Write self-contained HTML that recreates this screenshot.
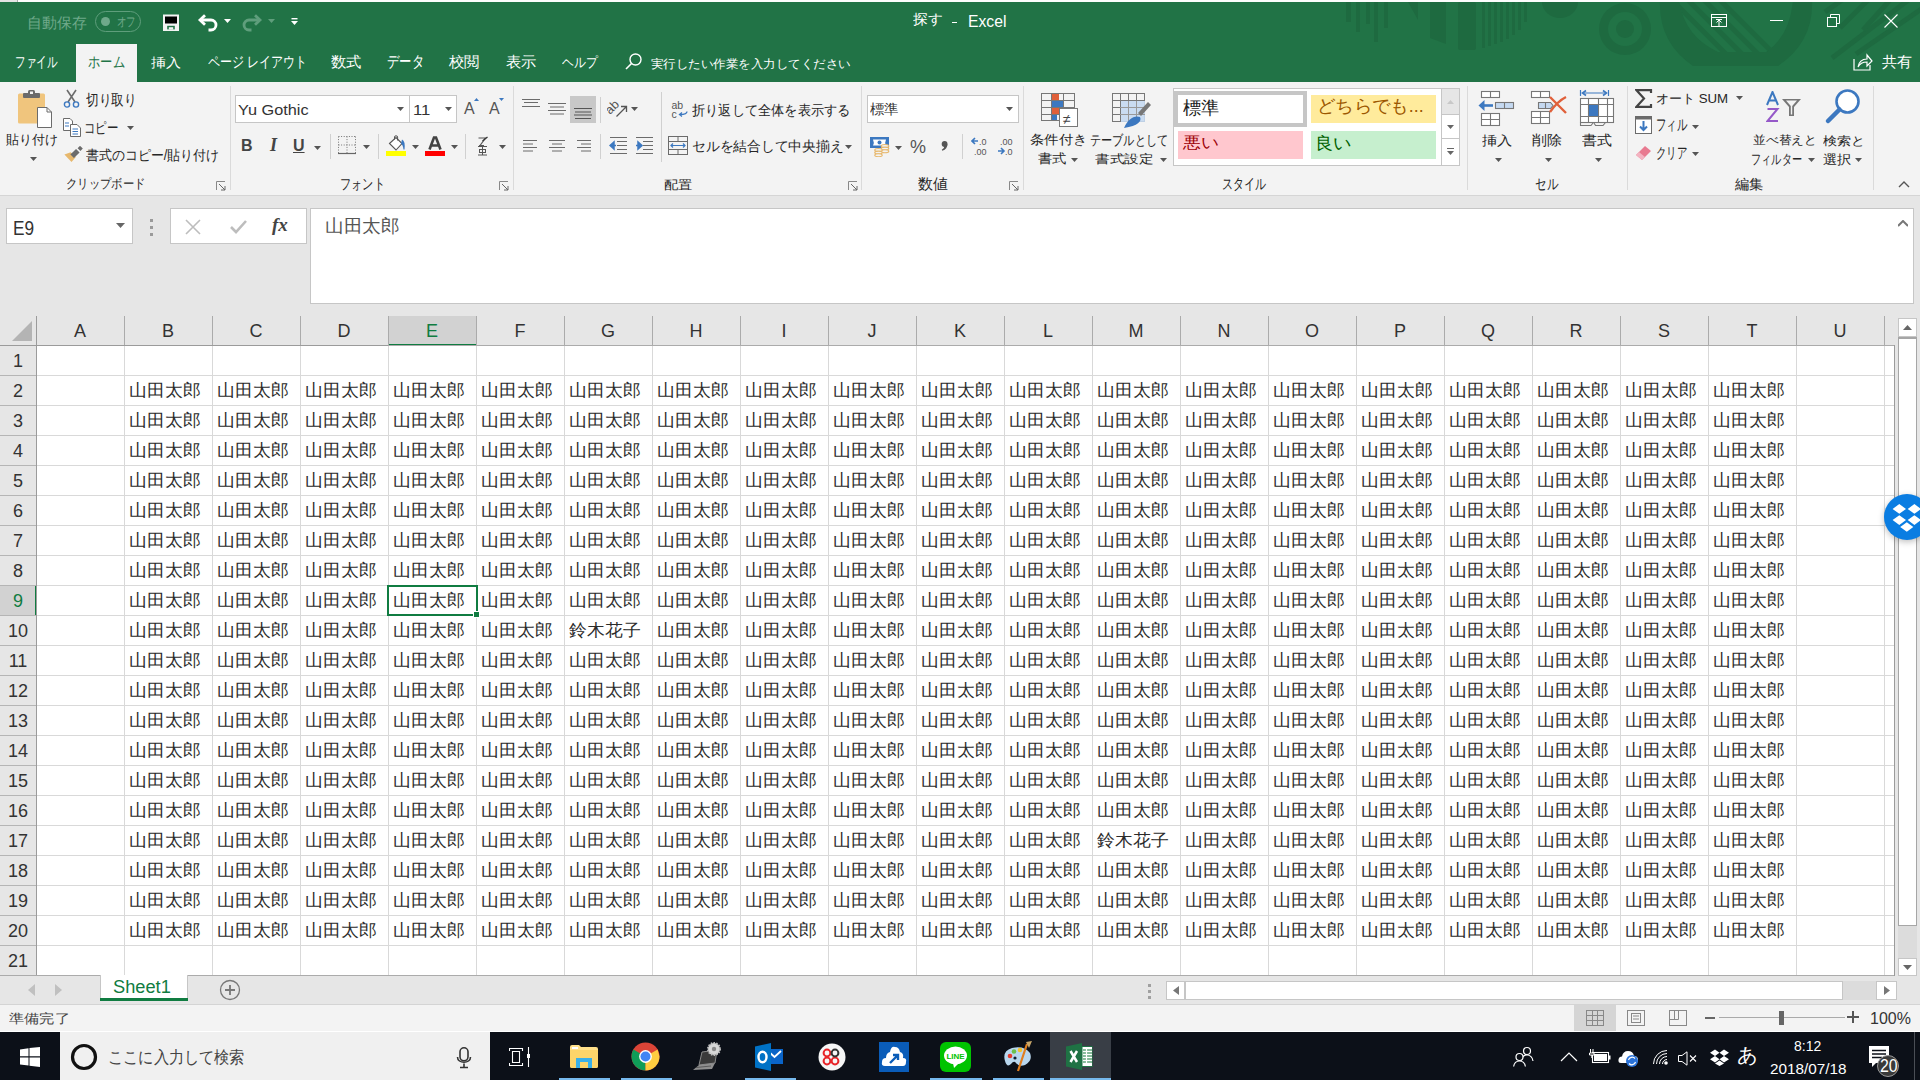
<!DOCTYPE html><html lang="ja"><head><meta charset="utf-8"><style>
html,body{margin:0;padding:0}
body{width:1920px;height:1080px;position:relative;overflow:hidden;background:#e6e6e6;font-family:"Liberation Sans",sans-serif}
.t{position:absolute;white-space:nowrap;line-height:1}
.cell{font-size:16.5px;color:#2b2b2b;transform:scaleX(1.05);transform-origin:0 0}
</style></head><body><div style="position:absolute;left:0px;top:0px;width:1920px;height:2px;background:#fdfdfd"></div><div style="position:absolute;left:0px;top:0px;width:17px;height:2px;background:#e3e3e3;border-right:1px solid #aaa"></div><div style="position:absolute;left:0px;top:2px;width:1920px;height:80px;background:#217346"></div><svg style="position:absolute;left:1320px;top:2px" width="600" height="80" viewBox="0 0 600 80">
<g fill="#1e6a40">
<rect x="26" y="0" width="5" height="20"/><rect x="36" y="0" width="4" height="30"/><rect x="46" y="0" width="4" height="22"/><rect x="54" y="0" width="4" height="40"/><rect x="64" y="0" width="4" height="26"/>
<polygon points="88,0 98,0 98,18"/>
<polygon points="110,0 126,0 126,42 110,36"/>
<rect x="138" y="0" width="18" height="48" rx="2"/>
<rect x="162" y="0" width="3" height="46"/><rect x="168" y="0" width="3" height="44"/><rect x="174" y="0" width="3" height="42"/><rect x="180" y="0" width="3" height="40"/><rect x="186" y="0" width="3" height="37"/><rect x="192" y="0" width="3" height="33"/><rect x="198" y="0" width="3" height="28"/><rect x="204" y="0" width="3" height="20"/>
<path d="M222,0 a18,16 0 0 0 36,0z"/>
<circle cx="305" cy="27" r="26"/>
</g>
<circle cx="305" cy="27" r="17" fill="#217346"/><circle cx="305" cy="27" r="9" fill="#1e6a40"/>
<defs><clipPath id="bowl"><path d="M359,-2 H473 Q470,34 446,50 H398 Q364,34 359,-2 Z"/></clipPath></defs>
<path d="M340,-2 H492 Q494,40 458,64 H373 Q338,40 340,-2 Z" fill="#1e6a40"/>
<path d="M359,-2 H473 Q470,34 446,50 H398 Q364,34 359,-2 Z" fill="#217346"/>
<g clip-path="url(#bowl)" stroke="#1e6a40" stroke-width="5"><line x1="352" y1="-2" x2="414" y2="60"/><line x1="368" y1="-2" x2="430" y2="60"/><line x1="384" y1="-2" x2="446" y2="60"/><line x1="400" y1="-2" x2="462" y2="60"/></g>
<g stroke="#1e6a40" stroke-width="5"><line x1="591" y1="-4" x2="512" y2="56"/><line x1="603" y1="6" x2="536" y2="52"/><line x1="522" y1="-2" x2="505" y2="10"/><line x1="548" y1="-2" x2="520" y2="26"/><line x1="570" y1="-2" x2="543" y2="28"/></g>
</svg><div class="t" style="left:27.01px;top:15.00px;font-size:15.00px;color:#6fa98a;transform:scaleX(0.9948);transform-origin:0 0;">自動保存</div><div style="position:absolute;left:95px;top:11px;width:46px;height:21px;border:1px solid #5f9e7c;border-radius:11px;box-sizing:border-box"></div><div style="position:absolute;left:101px;top:17px;width:9px;height:9px;background:#6fa98a;border-radius:50%"></div><div class="t" style="left:116.77px;top:15.00px;font-size:13.00px;color:#6fa98a;transform:scaleX(0.7292);transform-origin:0 0;">オフ</div><svg style="position:absolute;left:163px;top:14px;" width="17" height="17" viewBox="0 0 17 17"><rect x="0" y="0.5" width="16" height="16.5" fill="#f3f3f3"/><rect x="2" y="2.5" width="12" height="7" fill="{GREEN}"/><rect x="4.2" y="11.8" width="7.6" height="3.6" fill="#217346"/><rect x="5.8" y="13.2" width="4.4" height="2.4" fill="#f3f3f3"/></svg><svg style="position:absolute;left:197px;top:13px;" width="24" height="19" viewBox="0 0 24 19"><path d="M3.5,7 H14 A5,5 0 0 1 14,17 H11.5" fill="none" stroke="#fff" stroke-width="2.8"/><path d="M8,2.2 L3,7 L8,11.8" fill="none" stroke="#fff" stroke-width="2.8"/></svg><svg style="position:absolute;left:224px;top:19px;" width="8" height="5" viewBox="0 0 8 5"><path d="M0,0 h7 l-3.5,4z" fill="#fff"/></svg><svg style="position:absolute;left:241px;top:13px;" width="24" height="19" viewBox="0 0 24 19"><path d="M18.5,7 H8 A5,5 0 0 0 8,17 H10.5" fill="none" stroke="#5f9e7c" stroke-width="2.8"/><path d="M14,2.2 L19,7 L14,11.8" fill="none" stroke="#5f9e7c" stroke-width="2.8"/></svg><svg style="position:absolute;left:268px;top:19px;" width="8" height="5" viewBox="0 0 8 5"><path d="M0,0 h7 l-3.5,4z" fill="#5f9e7c"/></svg><svg style="position:absolute;left:291px;top:18px;" width="8" height="8" viewBox="0 0 8 8"><rect x="0.5" y="0" width="6" height="1.4" fill="#fff"/><path d="M0,3 h7 l-3.5,4z" fill="#fff"/></svg><div class="t" style="left:912.90px;top:13.07px;font-size:13.90px;color:#fff;transform:scaleX(1.0549);transform-origin:0 0;">探す</div><div class="t" style="left:967.70px;top:12.82px;font-size:16.36px;color:#fff;transform:scaleX(0.9599);transform-origin:0 0;">Excel</div><div style="position:absolute;left:952px;top:22px;width:5px;height:1px;background:#fff"></div><svg style="position:absolute;left:1711px;top:14px;" width="17" height="14" viewBox="0 0 17 14"><rect x="0.5" y="0.5" width="15" height="12" fill="none" stroke="#fff"/><line x1="0.5" y1="3.5" x2="15.5" y2="3.5" stroke="#fff"/><path d="M8,12 V6 M5.5,8.5 L8,6 L10.5,8.5 M5,5.5 H11" fill="none" stroke="#fff"/></svg><div style="position:absolute;left:1770px;top:20px;width:13px;height:1px;background:#fff"></div><svg style="position:absolute;left:1827px;top:14px;" width="14" height="14" viewBox="0 0 14 14"><rect x="0.5" y="3.5" width="9" height="9" fill="none" stroke="#fff"/><path d="M3.5,3.5 V0.5 H12.5 V9.5 H9.5" fill="none" stroke="#fff"/></svg><svg style="position:absolute;left:1884px;top:14px;" width="14" height="14" viewBox="0 0 14 14"><path d="M0.5,0.5 L13.5,13.5 M13.5,0.5 L0.5,13.5" stroke="#fff" stroke-width="1.1"/></svg><div style="position:absolute;left:76px;top:44px;width:61px;height:38px;background:#f3f3f3"></div><div class="t" style="left:15.30px;top:54.00px;font-size:15.00px;color:#fff;transform:scaleX(0.7034);transform-origin:0 0;">ファイル</div><div class="t" style="left:88.00px;top:54.00px;font-size:15.00px;color:#217346;transform:scaleX(0.8182);transform-origin:0 0;">ホーム</div><div class="t" style="left:151.00px;top:56.00px;font-size:13.00px;color:#fff;transform:scaleX(1.1538);transform-origin:0 0;">挿入</div><div class="t" style="left:207.50px;top:54.00px;font-size:15.00px;color:#fff;transform:scaleX(0.7975);transform-origin:0 0;">ページ レイアウト</div><div class="t" style="left:330.60px;top:54.00px;font-size:15.00px;color:#fff;transform:scaleX(1.0200);transform-origin:0 0;">数式</div><div class="t" style="left:386.67px;top:52.85px;font-size:16.15px;color:#fff;transform:scaleX(0.7716);transform-origin:0 0;">データ</div><div class="t" style="left:448.70px;top:54.00px;font-size:15.00px;color:#fff;transform:scaleX(1.0241);transform-origin:0 0;">校閲</div><div class="t" style="left:505.50px;top:54.00px;font-size:15.00px;color:#fff;transform:scaleX(1.0167);transform-origin:0 0;">表示</div><div class="t" style="left:562.40px;top:55.00px;font-size:14.00px;color:#fff;transform:scaleX(0.8478);transform-origin:0 0;">ヘルプ</div><svg style="position:absolute;left:625px;top:53px;" width="18" height="18" viewBox="0 0 18 18"><circle cx="10.5" cy="6.5" r="5.5" fill="none" stroke="#fff" stroke-width="1.4"/><line x1="6.5" y1="10.5" x2="1" y2="16" stroke="#fff" stroke-width="1.6"/></svg><div class="t" style="left:651.30px;top:58.00px;font-size:12.13px;color:#fff;transform:scaleX(1.0410);transform-origin:0 0;">実行したい作業を入力してください</div><svg style="position:absolute;left:1853px;top:53px;" width="20" height="18" viewBox="0 0 20 18"><path d="M1,6 V17 H17 V12" fill="none" stroke="#fff" stroke-width="1.2"/><path d="M5,14 C6,8 9,6 14,6 V2 L19,8 L14,13 V9 C10,9 7,10 5,14 Z" fill="none" stroke="#fff" stroke-width="1.2"/></svg><div class="t" style="left:1882.00px;top:54.00px;font-size:15.00px;color:#fff;transform:scaleX(1.0000);transform-origin:0 0;">共有</div><div style="position:absolute;left:0px;top:82px;width:1920px;height:113px;background:#f3f3f3"></div><div style="position:absolute;left:0px;top:195px;width:1920px;height:1px;background:#d5d5d5"></div><div style="position:absolute;left:230px;top:86px;width:1px;height:104px;background:#dadada"></div><div style="position:absolute;left:513px;top:86px;width:1px;height:104px;background:#dadada"></div><div style="position:absolute;left:861px;top:86px;width:1px;height:104px;background:#dadada"></div><div style="position:absolute;left:1023px;top:86px;width:1px;height:104px;background:#dadada"></div><div style="position:absolute;left:1467px;top:86px;width:1px;height:104px;background:#dadada"></div><div style="position:absolute;left:1627px;top:86px;width:1px;height:104px;background:#dadada"></div><div style="position:absolute;left:1873px;top:86px;width:1px;height:104px;background:#dadada"></div><div style="position:absolute;left:6px;top:208px;width:127px;height:36px;background:#fff;border:1px solid #c6c6c6;box-sizing:border-box"></div><div class="t" style="left:12.98px;top:218.43px;font-size:20.12px;color:#333;transform:scaleX(0.8584);transform-origin:0 0;">E9</div><svg style="position:absolute;left:116px;top:223px;" width="9" height="5" viewBox="0 0 9 5"><path d="M0,0 h9 l-4.5,5z" fill="#666"/></svg><div style="position:absolute;left:150px;top:219px;width:3px;height:3px;background:#9a9a9a"></div><div style="position:absolute;left:150px;top:226px;width:3px;height:3px;background:#9a9a9a"></div><div style="position:absolute;left:150px;top:233px;width:3px;height:3px;background:#9a9a9a"></div><div style="position:absolute;left:170px;top:208px;width:137px;height:36px;background:#fff;border:1px solid #c6c6c6;box-sizing:border-box"></div><svg style="position:absolute;left:185px;top:219px;" width="16" height="16" viewBox="0 0 16 16"><path d="M1,1 L15,15 M15,1 L1,15" stroke="#bdbdbd" stroke-width="1.6"/></svg><svg style="position:absolute;left:230px;top:219px;" width="17" height="15" viewBox="0 0 17 15"><path d="M1,8 L6,13 L16,2" fill="none" stroke="#bdbdbd" stroke-width="2.6"/></svg><div class="t" style="left:272px;top:215px;font-size:19px;color:#444;font-family:'Liberation Serif',serif;font-weight:bold"><i>fx</i></div><div style="position:absolute;left:310px;top:208px;width:1604px;height:96px;background:#fff;border:1px solid #c6c6c6;box-sizing:border-box"></div><div class="t" style="left:324.93px;top:217.50px;font-size:17.53px;color:#555;transform:scaleX(1.0358);transform-origin:0 0;">山田太郎</div><svg style="position:absolute;left:1898px;top:220px;" width="10" height="7" viewBox="0 0 10 7"><path d="M0,6 L5,1 L10,6" fill="none" stroke="#777" stroke-width="2"/></svg><div style="position:absolute;left:0px;top:316px;width:1894px;height:29px;background:#e6e6e6"></div><div style="position:absolute;left:0px;top:345px;width:36px;height:630px;background:#e6e6e6"></div><div style="position:absolute;left:37px;top:346px;width:1857px;height:629px;background:#fff"></div><svg style="position:absolute;left:11px;top:320px;" width="22" height="22" viewBox="0 0 22 22"><path d="M21,1 V21 H1 Z" fill="#b4b4b4"/></svg><div style="position:absolute;left:388px;top:316px;width:88px;height:29px;background:#d2d2d2"></div><div style="position:absolute;left:388px;top:344px;width:89px;height:2px;background:#107c41"></div><div style="position:absolute;left:0px;top:585px;width:36px;height:30px;background:#d2d2d2"></div><div style="position:absolute;left:35px;top:585px;width:2px;height:30px;background:#107c41"></div><div style="position:absolute;left:36px;top:316px;width:1px;height:29px;background:#ababab"></div><div style="position:absolute;left:124px;top:316px;width:1px;height:29px;background:#ababab"></div><div style="position:absolute;left:212px;top:316px;width:1px;height:29px;background:#ababab"></div><div style="position:absolute;left:300px;top:316px;width:1px;height:29px;background:#ababab"></div><div style="position:absolute;left:388px;top:316px;width:1px;height:29px;background:#ababab"></div><div style="position:absolute;left:476px;top:316px;width:1px;height:29px;background:#ababab"></div><div style="position:absolute;left:564px;top:316px;width:1px;height:29px;background:#ababab"></div><div style="position:absolute;left:652px;top:316px;width:1px;height:29px;background:#ababab"></div><div style="position:absolute;left:740px;top:316px;width:1px;height:29px;background:#ababab"></div><div style="position:absolute;left:828px;top:316px;width:1px;height:29px;background:#ababab"></div><div style="position:absolute;left:916px;top:316px;width:1px;height:29px;background:#ababab"></div><div style="position:absolute;left:1004px;top:316px;width:1px;height:29px;background:#ababab"></div><div style="position:absolute;left:1092px;top:316px;width:1px;height:29px;background:#ababab"></div><div style="position:absolute;left:1180px;top:316px;width:1px;height:29px;background:#ababab"></div><div style="position:absolute;left:1268px;top:316px;width:1px;height:29px;background:#ababab"></div><div style="position:absolute;left:1356px;top:316px;width:1px;height:29px;background:#ababab"></div><div style="position:absolute;left:1444px;top:316px;width:1px;height:29px;background:#ababab"></div><div style="position:absolute;left:1532px;top:316px;width:1px;height:29px;background:#ababab"></div><div style="position:absolute;left:1620px;top:316px;width:1px;height:29px;background:#ababab"></div><div style="position:absolute;left:1708px;top:316px;width:1px;height:29px;background:#ababab"></div><div style="position:absolute;left:1796px;top:316px;width:1px;height:29px;background:#ababab"></div><div style="position:absolute;left:1884px;top:316px;width:1px;height:29px;background:#ababab"></div><div style="position:absolute;left:0px;top:345px;width:1894px;height:1px;background:#ababab"></div><div style="position:absolute;left:0px;top:345px;width:388px;height:1px;background:#9b9b9b"></div><div style="position:absolute;left:36px;top:316px;width:1px;height:660px;background:#9b9b9b"></div><div style="position:absolute;left:124px;top:346px;width:1px;height:629px;background:#d9d9d9"></div><div style="position:absolute;left:212px;top:346px;width:1px;height:629px;background:#d9d9d9"></div><div style="position:absolute;left:300px;top:346px;width:1px;height:629px;background:#d9d9d9"></div><div style="position:absolute;left:388px;top:346px;width:1px;height:629px;background:#d9d9d9"></div><div style="position:absolute;left:476px;top:346px;width:1px;height:629px;background:#d9d9d9"></div><div style="position:absolute;left:564px;top:346px;width:1px;height:629px;background:#d9d9d9"></div><div style="position:absolute;left:652px;top:346px;width:1px;height:629px;background:#d9d9d9"></div><div style="position:absolute;left:740px;top:346px;width:1px;height:629px;background:#d9d9d9"></div><div style="position:absolute;left:828px;top:346px;width:1px;height:629px;background:#d9d9d9"></div><div style="position:absolute;left:916px;top:346px;width:1px;height:629px;background:#d9d9d9"></div><div style="position:absolute;left:1004px;top:346px;width:1px;height:629px;background:#d9d9d9"></div><div style="position:absolute;left:1092px;top:346px;width:1px;height:629px;background:#d9d9d9"></div><div style="position:absolute;left:1180px;top:346px;width:1px;height:629px;background:#d9d9d9"></div><div style="position:absolute;left:1268px;top:346px;width:1px;height:629px;background:#d9d9d9"></div><div style="position:absolute;left:1356px;top:346px;width:1px;height:629px;background:#d9d9d9"></div><div style="position:absolute;left:1444px;top:346px;width:1px;height:629px;background:#d9d9d9"></div><div style="position:absolute;left:1532px;top:346px;width:1px;height:629px;background:#d9d9d9"></div><div style="position:absolute;left:1620px;top:346px;width:1px;height:629px;background:#d9d9d9"></div><div style="position:absolute;left:1708px;top:346px;width:1px;height:629px;background:#d9d9d9"></div><div style="position:absolute;left:1796px;top:346px;width:1px;height:629px;background:#d9d9d9"></div><div style="position:absolute;left:1884px;top:346px;width:1px;height:629px;background:#d9d9d9"></div><div style="position:absolute;left:37px;top:375px;width:1857px;height:1px;background:#d9d9d9"></div><div style="position:absolute;left:0px;top:375px;width:36px;height:1px;background:#b5b5b5"></div><div style="position:absolute;left:37px;top:405px;width:1857px;height:1px;background:#d9d9d9"></div><div style="position:absolute;left:0px;top:405px;width:36px;height:1px;background:#b5b5b5"></div><div style="position:absolute;left:37px;top:435px;width:1857px;height:1px;background:#d9d9d9"></div><div style="position:absolute;left:0px;top:435px;width:36px;height:1px;background:#b5b5b5"></div><div style="position:absolute;left:37px;top:465px;width:1857px;height:1px;background:#d9d9d9"></div><div style="position:absolute;left:0px;top:465px;width:36px;height:1px;background:#b5b5b5"></div><div style="position:absolute;left:37px;top:495px;width:1857px;height:1px;background:#d9d9d9"></div><div style="position:absolute;left:0px;top:495px;width:36px;height:1px;background:#b5b5b5"></div><div style="position:absolute;left:37px;top:525px;width:1857px;height:1px;background:#d9d9d9"></div><div style="position:absolute;left:0px;top:525px;width:36px;height:1px;background:#b5b5b5"></div><div style="position:absolute;left:37px;top:555px;width:1857px;height:1px;background:#d9d9d9"></div><div style="position:absolute;left:0px;top:555px;width:36px;height:1px;background:#b5b5b5"></div><div style="position:absolute;left:37px;top:585px;width:1857px;height:1px;background:#d9d9d9"></div><div style="position:absolute;left:0px;top:585px;width:36px;height:1px;background:#b5b5b5"></div><div style="position:absolute;left:37px;top:615px;width:1857px;height:1px;background:#d9d9d9"></div><div style="position:absolute;left:0px;top:615px;width:36px;height:1px;background:#b5b5b5"></div><div style="position:absolute;left:37px;top:645px;width:1857px;height:1px;background:#d9d9d9"></div><div style="position:absolute;left:0px;top:645px;width:36px;height:1px;background:#b5b5b5"></div><div style="position:absolute;left:37px;top:675px;width:1857px;height:1px;background:#d9d9d9"></div><div style="position:absolute;left:0px;top:675px;width:36px;height:1px;background:#b5b5b5"></div><div style="position:absolute;left:37px;top:705px;width:1857px;height:1px;background:#d9d9d9"></div><div style="position:absolute;left:0px;top:705px;width:36px;height:1px;background:#b5b5b5"></div><div style="position:absolute;left:37px;top:735px;width:1857px;height:1px;background:#d9d9d9"></div><div style="position:absolute;left:0px;top:735px;width:36px;height:1px;background:#b5b5b5"></div><div style="position:absolute;left:37px;top:765px;width:1857px;height:1px;background:#d9d9d9"></div><div style="position:absolute;left:0px;top:765px;width:36px;height:1px;background:#b5b5b5"></div><div style="position:absolute;left:37px;top:795px;width:1857px;height:1px;background:#d9d9d9"></div><div style="position:absolute;left:0px;top:795px;width:36px;height:1px;background:#b5b5b5"></div><div style="position:absolute;left:37px;top:825px;width:1857px;height:1px;background:#d9d9d9"></div><div style="position:absolute;left:0px;top:825px;width:36px;height:1px;background:#b5b5b5"></div><div style="position:absolute;left:37px;top:855px;width:1857px;height:1px;background:#d9d9d9"></div><div style="position:absolute;left:0px;top:855px;width:36px;height:1px;background:#b5b5b5"></div><div style="position:absolute;left:37px;top:885px;width:1857px;height:1px;background:#d9d9d9"></div><div style="position:absolute;left:0px;top:885px;width:36px;height:1px;background:#b5b5b5"></div><div style="position:absolute;left:37px;top:915px;width:1857px;height:1px;background:#d9d9d9"></div><div style="position:absolute;left:0px;top:915px;width:36px;height:1px;background:#b5b5b5"></div><div style="position:absolute;left:37px;top:945px;width:1857px;height:1px;background:#d9d9d9"></div><div style="position:absolute;left:0px;top:945px;width:36px;height:1px;background:#b5b5b5"></div><div style="position:absolute;left:37px;top:975px;width:1857px;height:1px;background:#d9d9d9"></div><div style="position:absolute;left:0px;top:975px;width:36px;height:1px;background:#b5b5b5"></div><div class="t" style="left:36px;top:322px;width:88px;text-align:center;font-size:18px;color:#333">A</div><div class="t" style="left:124px;top:322px;width:88px;text-align:center;font-size:18px;color:#333">B</div><div class="t" style="left:212px;top:322px;width:88px;text-align:center;font-size:18px;color:#333">C</div><div class="t" style="left:300px;top:322px;width:88px;text-align:center;font-size:18px;color:#333">D</div><div class="t" style="left:388px;top:322px;width:88px;text-align:center;font-size:18px;color:#107c41">E</div><div class="t" style="left:476px;top:322px;width:88px;text-align:center;font-size:18px;color:#333">F</div><div class="t" style="left:564px;top:322px;width:88px;text-align:center;font-size:18px;color:#333">G</div><div class="t" style="left:652px;top:322px;width:88px;text-align:center;font-size:18px;color:#333">H</div><div class="t" style="left:740px;top:322px;width:88px;text-align:center;font-size:18px;color:#333">I</div><div class="t" style="left:828px;top:322px;width:88px;text-align:center;font-size:18px;color:#333">J</div><div class="t" style="left:916px;top:322px;width:88px;text-align:center;font-size:18px;color:#333">K</div><div class="t" style="left:1004px;top:322px;width:88px;text-align:center;font-size:18px;color:#333">L</div><div class="t" style="left:1092px;top:322px;width:88px;text-align:center;font-size:18px;color:#333">M</div><div class="t" style="left:1180px;top:322px;width:88px;text-align:center;font-size:18px;color:#333">N</div><div class="t" style="left:1268px;top:322px;width:88px;text-align:center;font-size:18px;color:#333">O</div><div class="t" style="left:1356px;top:322px;width:88px;text-align:center;font-size:18px;color:#333">P</div><div class="t" style="left:1444px;top:322px;width:88px;text-align:center;font-size:18px;color:#333">Q</div><div class="t" style="left:1532px;top:322px;width:88px;text-align:center;font-size:18px;color:#333">R</div><div class="t" style="left:1620px;top:322px;width:88px;text-align:center;font-size:18px;color:#333">S</div><div class="t" style="left:1708px;top:322px;width:88px;text-align:center;font-size:18px;color:#333">T</div><div class="t" style="left:1796px;top:322px;width:88px;text-align:center;font-size:18px;color:#333">U</div><div class="t" style="left:0px;top:352px;width:36px;text-align:center;font-size:18px;color:#333">1</div><div class="t" style="left:0px;top:382px;width:36px;text-align:center;font-size:18px;color:#333">2</div><div class="t" style="left:0px;top:412px;width:36px;text-align:center;font-size:18px;color:#333">3</div><div class="t" style="left:0px;top:442px;width:36px;text-align:center;font-size:18px;color:#333">4</div><div class="t" style="left:0px;top:472px;width:36px;text-align:center;font-size:18px;color:#333">5</div><div class="t" style="left:0px;top:502px;width:36px;text-align:center;font-size:18px;color:#333">6</div><div class="t" style="left:0px;top:532px;width:36px;text-align:center;font-size:18px;color:#333">7</div><div class="t" style="left:0px;top:562px;width:36px;text-align:center;font-size:18px;color:#333">8</div><div class="t" style="left:0px;top:592px;width:36px;text-align:center;font-size:18px;color:#107c41">9</div><div class="t" style="left:0px;top:622px;width:36px;text-align:center;font-size:18px;color:#333">10</div><div class="t" style="left:0px;top:652px;width:36px;text-align:center;font-size:18px;color:#333">11</div><div class="t" style="left:0px;top:682px;width:36px;text-align:center;font-size:18px;color:#333">12</div><div class="t" style="left:0px;top:712px;width:36px;text-align:center;font-size:18px;color:#333">13</div><div class="t" style="left:0px;top:742px;width:36px;text-align:center;font-size:18px;color:#333">14</div><div class="t" style="left:0px;top:772px;width:36px;text-align:center;font-size:18px;color:#333">15</div><div class="t" style="left:0px;top:802px;width:36px;text-align:center;font-size:18px;color:#333">16</div><div class="t" style="left:0px;top:832px;width:36px;text-align:center;font-size:18px;color:#333">17</div><div class="t" style="left:0px;top:862px;width:36px;text-align:center;font-size:18px;color:#333">18</div><div class="t" style="left:0px;top:892px;width:36px;text-align:center;font-size:18px;color:#333">19</div><div class="t" style="left:0px;top:922px;width:36px;text-align:center;font-size:18px;color:#333">20</div><div class="t" style="left:0px;top:952px;width:36px;text-align:center;font-size:18px;color:#333">21</div><div class="t cell" style="left:128.5px;top:382px">山田太郎</div><div class="t cell" style="left:216.5px;top:382px">山田太郎</div><div class="t cell" style="left:304.5px;top:382px">山田太郎</div><div class="t cell" style="left:392.5px;top:382px">山田太郎</div><div class="t cell" style="left:480.5px;top:382px">山田太郎</div><div class="t cell" style="left:568.5px;top:382px">山田太郎</div><div class="t cell" style="left:656.5px;top:382px">山田太郎</div><div class="t cell" style="left:744.5px;top:382px">山田太郎</div><div class="t cell" style="left:832.5px;top:382px">山田太郎</div><div class="t cell" style="left:920.5px;top:382px">山田太郎</div><div class="t cell" style="left:1008.5px;top:382px">山田太郎</div><div class="t cell" style="left:1096.5px;top:382px">山田太郎</div><div class="t cell" style="left:1184.5px;top:382px">山田太郎</div><div class="t cell" style="left:1272.5px;top:382px">山田太郎</div><div class="t cell" style="left:1360.5px;top:382px">山田太郎</div><div class="t cell" style="left:1448.5px;top:382px">山田太郎</div><div class="t cell" style="left:1536.5px;top:382px">山田太郎</div><div class="t cell" style="left:1624.5px;top:382px">山田太郎</div><div class="t cell" style="left:1712.5px;top:382px">山田太郎</div><div class="t cell" style="left:128.5px;top:412px">山田太郎</div><div class="t cell" style="left:216.5px;top:412px">山田太郎</div><div class="t cell" style="left:304.5px;top:412px">山田太郎</div><div class="t cell" style="left:392.5px;top:412px">山田太郎</div><div class="t cell" style="left:480.5px;top:412px">山田太郎</div><div class="t cell" style="left:568.5px;top:412px">山田太郎</div><div class="t cell" style="left:656.5px;top:412px">山田太郎</div><div class="t cell" style="left:744.5px;top:412px">山田太郎</div><div class="t cell" style="left:832.5px;top:412px">山田太郎</div><div class="t cell" style="left:920.5px;top:412px">山田太郎</div><div class="t cell" style="left:1008.5px;top:412px">山田太郎</div><div class="t cell" style="left:1096.5px;top:412px">山田太郎</div><div class="t cell" style="left:1184.5px;top:412px">山田太郎</div><div class="t cell" style="left:1272.5px;top:412px">山田太郎</div><div class="t cell" style="left:1360.5px;top:412px">山田太郎</div><div class="t cell" style="left:1448.5px;top:412px">山田太郎</div><div class="t cell" style="left:1536.5px;top:412px">山田太郎</div><div class="t cell" style="left:1624.5px;top:412px">山田太郎</div><div class="t cell" style="left:1712.5px;top:412px">山田太郎</div><div class="t cell" style="left:128.5px;top:442px">山田太郎</div><div class="t cell" style="left:216.5px;top:442px">山田太郎</div><div class="t cell" style="left:304.5px;top:442px">山田太郎</div><div class="t cell" style="left:392.5px;top:442px">山田太郎</div><div class="t cell" style="left:480.5px;top:442px">山田太郎</div><div class="t cell" style="left:568.5px;top:442px">山田太郎</div><div class="t cell" style="left:656.5px;top:442px">山田太郎</div><div class="t cell" style="left:744.5px;top:442px">山田太郎</div><div class="t cell" style="left:832.5px;top:442px">山田太郎</div><div class="t cell" style="left:920.5px;top:442px">山田太郎</div><div class="t cell" style="left:1008.5px;top:442px">山田太郎</div><div class="t cell" style="left:1096.5px;top:442px">山田太郎</div><div class="t cell" style="left:1184.5px;top:442px">山田太郎</div><div class="t cell" style="left:1272.5px;top:442px">山田太郎</div><div class="t cell" style="left:1360.5px;top:442px">山田太郎</div><div class="t cell" style="left:1448.5px;top:442px">山田太郎</div><div class="t cell" style="left:1536.5px;top:442px">山田太郎</div><div class="t cell" style="left:1624.5px;top:442px">山田太郎</div><div class="t cell" style="left:1712.5px;top:442px">山田太郎</div><div class="t cell" style="left:128.5px;top:472px">山田太郎</div><div class="t cell" style="left:216.5px;top:472px">山田太郎</div><div class="t cell" style="left:304.5px;top:472px">山田太郎</div><div class="t cell" style="left:392.5px;top:472px">山田太郎</div><div class="t cell" style="left:480.5px;top:472px">山田太郎</div><div class="t cell" style="left:568.5px;top:472px">山田太郎</div><div class="t cell" style="left:656.5px;top:472px">山田太郎</div><div class="t cell" style="left:744.5px;top:472px">山田太郎</div><div class="t cell" style="left:832.5px;top:472px">山田太郎</div><div class="t cell" style="left:920.5px;top:472px">山田太郎</div><div class="t cell" style="left:1008.5px;top:472px">山田太郎</div><div class="t cell" style="left:1096.5px;top:472px">山田太郎</div><div class="t cell" style="left:1184.5px;top:472px">山田太郎</div><div class="t cell" style="left:1272.5px;top:472px">山田太郎</div><div class="t cell" style="left:1360.5px;top:472px">山田太郎</div><div class="t cell" style="left:1448.5px;top:472px">山田太郎</div><div class="t cell" style="left:1536.5px;top:472px">山田太郎</div><div class="t cell" style="left:1624.5px;top:472px">山田太郎</div><div class="t cell" style="left:1712.5px;top:472px">山田太郎</div><div class="t cell" style="left:128.5px;top:502px">山田太郎</div><div class="t cell" style="left:216.5px;top:502px">山田太郎</div><div class="t cell" style="left:304.5px;top:502px">山田太郎</div><div class="t cell" style="left:392.5px;top:502px">山田太郎</div><div class="t cell" style="left:480.5px;top:502px">山田太郎</div><div class="t cell" style="left:568.5px;top:502px">山田太郎</div><div class="t cell" style="left:656.5px;top:502px">山田太郎</div><div class="t cell" style="left:744.5px;top:502px">山田太郎</div><div class="t cell" style="left:832.5px;top:502px">山田太郎</div><div class="t cell" style="left:920.5px;top:502px">山田太郎</div><div class="t cell" style="left:1008.5px;top:502px">山田太郎</div><div class="t cell" style="left:1096.5px;top:502px">山田太郎</div><div class="t cell" style="left:1184.5px;top:502px">山田太郎</div><div class="t cell" style="left:1272.5px;top:502px">山田太郎</div><div class="t cell" style="left:1360.5px;top:502px">山田太郎</div><div class="t cell" style="left:1448.5px;top:502px">山田太郎</div><div class="t cell" style="left:1536.5px;top:502px">山田太郎</div><div class="t cell" style="left:1624.5px;top:502px">山田太郎</div><div class="t cell" style="left:1712.5px;top:502px">山田太郎</div><div class="t cell" style="left:128.5px;top:532px">山田太郎</div><div class="t cell" style="left:216.5px;top:532px">山田太郎</div><div class="t cell" style="left:304.5px;top:532px">山田太郎</div><div class="t cell" style="left:392.5px;top:532px">山田太郎</div><div class="t cell" style="left:480.5px;top:532px">山田太郎</div><div class="t cell" style="left:568.5px;top:532px">山田太郎</div><div class="t cell" style="left:656.5px;top:532px">山田太郎</div><div class="t cell" style="left:744.5px;top:532px">山田太郎</div><div class="t cell" style="left:832.5px;top:532px">山田太郎</div><div class="t cell" style="left:920.5px;top:532px">山田太郎</div><div class="t cell" style="left:1008.5px;top:532px">山田太郎</div><div class="t cell" style="left:1096.5px;top:532px">山田太郎</div><div class="t cell" style="left:1184.5px;top:532px">山田太郎</div><div class="t cell" style="left:1272.5px;top:532px">山田太郎</div><div class="t cell" style="left:1360.5px;top:532px">山田太郎</div><div class="t cell" style="left:1448.5px;top:532px">山田太郎</div><div class="t cell" style="left:1536.5px;top:532px">山田太郎</div><div class="t cell" style="left:1624.5px;top:532px">山田太郎</div><div class="t cell" style="left:1712.5px;top:532px">山田太郎</div><div class="t cell" style="left:128.5px;top:562px">山田太郎</div><div class="t cell" style="left:216.5px;top:562px">山田太郎</div><div class="t cell" style="left:304.5px;top:562px">山田太郎</div><div class="t cell" style="left:392.5px;top:562px">山田太郎</div><div class="t cell" style="left:480.5px;top:562px">山田太郎</div><div class="t cell" style="left:568.5px;top:562px">山田太郎</div><div class="t cell" style="left:656.5px;top:562px">山田太郎</div><div class="t cell" style="left:744.5px;top:562px">山田太郎</div><div class="t cell" style="left:832.5px;top:562px">山田太郎</div><div class="t cell" style="left:920.5px;top:562px">山田太郎</div><div class="t cell" style="left:1008.5px;top:562px">山田太郎</div><div class="t cell" style="left:1096.5px;top:562px">山田太郎</div><div class="t cell" style="left:1184.5px;top:562px">山田太郎</div><div class="t cell" style="left:1272.5px;top:562px">山田太郎</div><div class="t cell" style="left:1360.5px;top:562px">山田太郎</div><div class="t cell" style="left:1448.5px;top:562px">山田太郎</div><div class="t cell" style="left:1536.5px;top:562px">山田太郎</div><div class="t cell" style="left:1624.5px;top:562px">山田太郎</div><div class="t cell" style="left:1712.5px;top:562px">山田太郎</div><div class="t cell" style="left:128.5px;top:592px">山田太郎</div><div class="t cell" style="left:216.5px;top:592px">山田太郎</div><div class="t cell" style="left:304.5px;top:592px">山田太郎</div><div class="t cell" style="left:392.5px;top:592px">山田太郎</div><div class="t cell" style="left:480.5px;top:592px">山田太郎</div><div class="t cell" style="left:568.5px;top:592px">山田太郎</div><div class="t cell" style="left:656.5px;top:592px">山田太郎</div><div class="t cell" style="left:744.5px;top:592px">山田太郎</div><div class="t cell" style="left:832.5px;top:592px">山田太郎</div><div class="t cell" style="left:920.5px;top:592px">山田太郎</div><div class="t cell" style="left:1008.5px;top:592px">山田太郎</div><div class="t cell" style="left:1096.5px;top:592px">山田太郎</div><div class="t cell" style="left:1184.5px;top:592px">山田太郎</div><div class="t cell" style="left:1272.5px;top:592px">山田太郎</div><div class="t cell" style="left:1360.5px;top:592px">山田太郎</div><div class="t cell" style="left:1448.5px;top:592px">山田太郎</div><div class="t cell" style="left:1536.5px;top:592px">山田太郎</div><div class="t cell" style="left:1624.5px;top:592px">山田太郎</div><div class="t cell" style="left:1712.5px;top:592px">山田太郎</div><div class="t cell" style="left:128.5px;top:622px">山田太郎</div><div class="t cell" style="left:216.5px;top:622px">山田太郎</div><div class="t cell" style="left:304.5px;top:622px">山田太郎</div><div class="t cell" style="left:392.5px;top:622px">山田太郎</div><div class="t cell" style="left:480.5px;top:622px">山田太郎</div><div class="t cell" style="left:568.5px;top:622px">鈴木花子</div><div class="t cell" style="left:656.5px;top:622px">山田太郎</div><div class="t cell" style="left:744.5px;top:622px">山田太郎</div><div class="t cell" style="left:832.5px;top:622px">山田太郎</div><div class="t cell" style="left:920.5px;top:622px">山田太郎</div><div class="t cell" style="left:1008.5px;top:622px">山田太郎</div><div class="t cell" style="left:1096.5px;top:622px">山田太郎</div><div class="t cell" style="left:1184.5px;top:622px">山田太郎</div><div class="t cell" style="left:1272.5px;top:622px">山田太郎</div><div class="t cell" style="left:1360.5px;top:622px">山田太郎</div><div class="t cell" style="left:1448.5px;top:622px">山田太郎</div><div class="t cell" style="left:1536.5px;top:622px">山田太郎</div><div class="t cell" style="left:1624.5px;top:622px">山田太郎</div><div class="t cell" style="left:1712.5px;top:622px">山田太郎</div><div class="t cell" style="left:128.5px;top:652px">山田太郎</div><div class="t cell" style="left:216.5px;top:652px">山田太郎</div><div class="t cell" style="left:304.5px;top:652px">山田太郎</div><div class="t cell" style="left:392.5px;top:652px">山田太郎</div><div class="t cell" style="left:480.5px;top:652px">山田太郎</div><div class="t cell" style="left:568.5px;top:652px">山田太郎</div><div class="t cell" style="left:656.5px;top:652px">山田太郎</div><div class="t cell" style="left:744.5px;top:652px">山田太郎</div><div class="t cell" style="left:832.5px;top:652px">山田太郎</div><div class="t cell" style="left:920.5px;top:652px">山田太郎</div><div class="t cell" style="left:1008.5px;top:652px">山田太郎</div><div class="t cell" style="left:1096.5px;top:652px">山田太郎</div><div class="t cell" style="left:1184.5px;top:652px">山田太郎</div><div class="t cell" style="left:1272.5px;top:652px">山田太郎</div><div class="t cell" style="left:1360.5px;top:652px">山田太郎</div><div class="t cell" style="left:1448.5px;top:652px">山田太郎</div><div class="t cell" style="left:1536.5px;top:652px">山田太郎</div><div class="t cell" style="left:1624.5px;top:652px">山田太郎</div><div class="t cell" style="left:1712.5px;top:652px">山田太郎</div><div class="t cell" style="left:128.5px;top:682px">山田太郎</div><div class="t cell" style="left:216.5px;top:682px">山田太郎</div><div class="t cell" style="left:304.5px;top:682px">山田太郎</div><div class="t cell" style="left:392.5px;top:682px">山田太郎</div><div class="t cell" style="left:480.5px;top:682px">山田太郎</div><div class="t cell" style="left:568.5px;top:682px">山田太郎</div><div class="t cell" style="left:656.5px;top:682px">山田太郎</div><div class="t cell" style="left:744.5px;top:682px">山田太郎</div><div class="t cell" style="left:832.5px;top:682px">山田太郎</div><div class="t cell" style="left:920.5px;top:682px">山田太郎</div><div class="t cell" style="left:1008.5px;top:682px">山田太郎</div><div class="t cell" style="left:1096.5px;top:682px">山田太郎</div><div class="t cell" style="left:1184.5px;top:682px">山田太郎</div><div class="t cell" style="left:1272.5px;top:682px">山田太郎</div><div class="t cell" style="left:1360.5px;top:682px">山田太郎</div><div class="t cell" style="left:1448.5px;top:682px">山田太郎</div><div class="t cell" style="left:1536.5px;top:682px">山田太郎</div><div class="t cell" style="left:1624.5px;top:682px">山田太郎</div><div class="t cell" style="left:1712.5px;top:682px">山田太郎</div><div class="t cell" style="left:128.5px;top:712px">山田太郎</div><div class="t cell" style="left:216.5px;top:712px">山田太郎</div><div class="t cell" style="left:304.5px;top:712px">山田太郎</div><div class="t cell" style="left:392.5px;top:712px">山田太郎</div><div class="t cell" style="left:480.5px;top:712px">山田太郎</div><div class="t cell" style="left:568.5px;top:712px">山田太郎</div><div class="t cell" style="left:656.5px;top:712px">山田太郎</div><div class="t cell" style="left:744.5px;top:712px">山田太郎</div><div class="t cell" style="left:832.5px;top:712px">山田太郎</div><div class="t cell" style="left:920.5px;top:712px">山田太郎</div><div class="t cell" style="left:1008.5px;top:712px">山田太郎</div><div class="t cell" style="left:1096.5px;top:712px">山田太郎</div><div class="t cell" style="left:1184.5px;top:712px">山田太郎</div><div class="t cell" style="left:1272.5px;top:712px">山田太郎</div><div class="t cell" style="left:1360.5px;top:712px">山田太郎</div><div class="t cell" style="left:1448.5px;top:712px">山田太郎</div><div class="t cell" style="left:1536.5px;top:712px">山田太郎</div><div class="t cell" style="left:1624.5px;top:712px">山田太郎</div><div class="t cell" style="left:1712.5px;top:712px">山田太郎</div><div class="t cell" style="left:128.5px;top:742px">山田太郎</div><div class="t cell" style="left:216.5px;top:742px">山田太郎</div><div class="t cell" style="left:304.5px;top:742px">山田太郎</div><div class="t cell" style="left:392.5px;top:742px">山田太郎</div><div class="t cell" style="left:480.5px;top:742px">山田太郎</div><div class="t cell" style="left:568.5px;top:742px">山田太郎</div><div class="t cell" style="left:656.5px;top:742px">山田太郎</div><div class="t cell" style="left:744.5px;top:742px">山田太郎</div><div class="t cell" style="left:832.5px;top:742px">山田太郎</div><div class="t cell" style="left:920.5px;top:742px">山田太郎</div><div class="t cell" style="left:1008.5px;top:742px">山田太郎</div><div class="t cell" style="left:1096.5px;top:742px">山田太郎</div><div class="t cell" style="left:1184.5px;top:742px">山田太郎</div><div class="t cell" style="left:1272.5px;top:742px">山田太郎</div><div class="t cell" style="left:1360.5px;top:742px">山田太郎</div><div class="t cell" style="left:1448.5px;top:742px">山田太郎</div><div class="t cell" style="left:1536.5px;top:742px">山田太郎</div><div class="t cell" style="left:1624.5px;top:742px">山田太郎</div><div class="t cell" style="left:1712.5px;top:742px">山田太郎</div><div class="t cell" style="left:128.5px;top:772px">山田太郎</div><div class="t cell" style="left:216.5px;top:772px">山田太郎</div><div class="t cell" style="left:304.5px;top:772px">山田太郎</div><div class="t cell" style="left:392.5px;top:772px">山田太郎</div><div class="t cell" style="left:480.5px;top:772px">山田太郎</div><div class="t cell" style="left:568.5px;top:772px">山田太郎</div><div class="t cell" style="left:656.5px;top:772px">山田太郎</div><div class="t cell" style="left:744.5px;top:772px">山田太郎</div><div class="t cell" style="left:832.5px;top:772px">山田太郎</div><div class="t cell" style="left:920.5px;top:772px">山田太郎</div><div class="t cell" style="left:1008.5px;top:772px">山田太郎</div><div class="t cell" style="left:1096.5px;top:772px">山田太郎</div><div class="t cell" style="left:1184.5px;top:772px">山田太郎</div><div class="t cell" style="left:1272.5px;top:772px">山田太郎</div><div class="t cell" style="left:1360.5px;top:772px">山田太郎</div><div class="t cell" style="left:1448.5px;top:772px">山田太郎</div><div class="t cell" style="left:1536.5px;top:772px">山田太郎</div><div class="t cell" style="left:1624.5px;top:772px">山田太郎</div><div class="t cell" style="left:1712.5px;top:772px">山田太郎</div><div class="t cell" style="left:128.5px;top:802px">山田太郎</div><div class="t cell" style="left:216.5px;top:802px">山田太郎</div><div class="t cell" style="left:304.5px;top:802px">山田太郎</div><div class="t cell" style="left:392.5px;top:802px">山田太郎</div><div class="t cell" style="left:480.5px;top:802px">山田太郎</div><div class="t cell" style="left:568.5px;top:802px">山田太郎</div><div class="t cell" style="left:656.5px;top:802px">山田太郎</div><div class="t cell" style="left:744.5px;top:802px">山田太郎</div><div class="t cell" style="left:832.5px;top:802px">山田太郎</div><div class="t cell" style="left:920.5px;top:802px">山田太郎</div><div class="t cell" style="left:1008.5px;top:802px">山田太郎</div><div class="t cell" style="left:1096.5px;top:802px">山田太郎</div><div class="t cell" style="left:1184.5px;top:802px">山田太郎</div><div class="t cell" style="left:1272.5px;top:802px">山田太郎</div><div class="t cell" style="left:1360.5px;top:802px">山田太郎</div><div class="t cell" style="left:1448.5px;top:802px">山田太郎</div><div class="t cell" style="left:1536.5px;top:802px">山田太郎</div><div class="t cell" style="left:1624.5px;top:802px">山田太郎</div><div class="t cell" style="left:1712.5px;top:802px">山田太郎</div><div class="t cell" style="left:128.5px;top:832px">山田太郎</div><div class="t cell" style="left:216.5px;top:832px">山田太郎</div><div class="t cell" style="left:304.5px;top:832px">山田太郎</div><div class="t cell" style="left:392.5px;top:832px">山田太郎</div><div class="t cell" style="left:480.5px;top:832px">山田太郎</div><div class="t cell" style="left:568.5px;top:832px">山田太郎</div><div class="t cell" style="left:656.5px;top:832px">山田太郎</div><div class="t cell" style="left:744.5px;top:832px">山田太郎</div><div class="t cell" style="left:832.5px;top:832px">山田太郎</div><div class="t cell" style="left:920.5px;top:832px">山田太郎</div><div class="t cell" style="left:1008.5px;top:832px">山田太郎</div><div class="t cell" style="left:1096.5px;top:832px">鈴木花子</div><div class="t cell" style="left:1184.5px;top:832px">山田太郎</div><div class="t cell" style="left:1272.5px;top:832px">山田太郎</div><div class="t cell" style="left:1360.5px;top:832px">山田太郎</div><div class="t cell" style="left:1448.5px;top:832px">山田太郎</div><div class="t cell" style="left:1536.5px;top:832px">山田太郎</div><div class="t cell" style="left:1624.5px;top:832px">山田太郎</div><div class="t cell" style="left:1712.5px;top:832px">山田太郎</div><div class="t cell" style="left:128.5px;top:862px">山田太郎</div><div class="t cell" style="left:216.5px;top:862px">山田太郎</div><div class="t cell" style="left:304.5px;top:862px">山田太郎</div><div class="t cell" style="left:392.5px;top:862px">山田太郎</div><div class="t cell" style="left:480.5px;top:862px">山田太郎</div><div class="t cell" style="left:568.5px;top:862px">山田太郎</div><div class="t cell" style="left:656.5px;top:862px">山田太郎</div><div class="t cell" style="left:744.5px;top:862px">山田太郎</div><div class="t cell" style="left:832.5px;top:862px">山田太郎</div><div class="t cell" style="left:920.5px;top:862px">山田太郎</div><div class="t cell" style="left:1008.5px;top:862px">山田太郎</div><div class="t cell" style="left:1096.5px;top:862px">山田太郎</div><div class="t cell" style="left:1184.5px;top:862px">山田太郎</div><div class="t cell" style="left:1272.5px;top:862px">山田太郎</div><div class="t cell" style="left:1360.5px;top:862px">山田太郎</div><div class="t cell" style="left:1448.5px;top:862px">山田太郎</div><div class="t cell" style="left:1536.5px;top:862px">山田太郎</div><div class="t cell" style="left:1624.5px;top:862px">山田太郎</div><div class="t cell" style="left:1712.5px;top:862px">山田太郎</div><div class="t cell" style="left:128.5px;top:892px">山田太郎</div><div class="t cell" style="left:216.5px;top:892px">山田太郎</div><div class="t cell" style="left:304.5px;top:892px">山田太郎</div><div class="t cell" style="left:392.5px;top:892px">山田太郎</div><div class="t cell" style="left:480.5px;top:892px">山田太郎</div><div class="t cell" style="left:568.5px;top:892px">山田太郎</div><div class="t cell" style="left:656.5px;top:892px">山田太郎</div><div class="t cell" style="left:744.5px;top:892px">山田太郎</div><div class="t cell" style="left:832.5px;top:892px">山田太郎</div><div class="t cell" style="left:920.5px;top:892px">山田太郎</div><div class="t cell" style="left:1008.5px;top:892px">山田太郎</div><div class="t cell" style="left:1096.5px;top:892px">山田太郎</div><div class="t cell" style="left:1184.5px;top:892px">山田太郎</div><div class="t cell" style="left:1272.5px;top:892px">山田太郎</div><div class="t cell" style="left:1360.5px;top:892px">山田太郎</div><div class="t cell" style="left:1448.5px;top:892px">山田太郎</div><div class="t cell" style="left:1536.5px;top:892px">山田太郎</div><div class="t cell" style="left:1624.5px;top:892px">山田太郎</div><div class="t cell" style="left:1712.5px;top:892px">山田太郎</div><div class="t cell" style="left:128.5px;top:922px">山田太郎</div><div class="t cell" style="left:216.5px;top:922px">山田太郎</div><div class="t cell" style="left:304.5px;top:922px">山田太郎</div><div class="t cell" style="left:392.5px;top:922px">山田太郎</div><div class="t cell" style="left:480.5px;top:922px">山田太郎</div><div class="t cell" style="left:568.5px;top:922px">山田太郎</div><div class="t cell" style="left:656.5px;top:922px">山田太郎</div><div class="t cell" style="left:744.5px;top:922px">山田太郎</div><div class="t cell" style="left:832.5px;top:922px">山田太郎</div><div class="t cell" style="left:920.5px;top:922px">山田太郎</div><div class="t cell" style="left:1008.5px;top:922px">山田太郎</div><div class="t cell" style="left:1096.5px;top:922px">山田太郎</div><div class="t cell" style="left:1184.5px;top:922px">山田太郎</div><div class="t cell" style="left:1272.5px;top:922px">山田太郎</div><div class="t cell" style="left:1360.5px;top:922px">山田太郎</div><div class="t cell" style="left:1448.5px;top:922px">山田太郎</div><div class="t cell" style="left:1536.5px;top:922px">山田太郎</div><div class="t cell" style="left:1624.5px;top:922px">山田太郎</div><div class="t cell" style="left:1712.5px;top:922px">山田太郎</div><div style="position:absolute;left:387px;top:585px;width:91px;height:31px;border:2px solid #107c41;box-sizing:border-box"></div><div style="position:absolute;left:473px;top:611px;width:7px;height:7px;background:#107c41;border:1px solid #fff;box-sizing:border-box"></div><div style="position:absolute;left:1894px;top:345px;width:1px;height:632px;background:#9b9b9b"></div><div style="position:absolute;left:1895px;top:316px;width:25px;height:660px;background:#e6e6e6"></div><div style="position:absolute;left:1898px;top:337px;width:19px;height:621px;background:#dcdcdc"></div><div style="position:absolute;left:1898px;top:318px;width:19px;height:19px;background:#fff;border:1px solid #c6c6c6;box-sizing:border-box"></div><svg style="position:absolute;left:1903px;top:325px;" width="9" height="5" viewBox="0 0 9 5"><path d="M0,5 L4.5,0 L9,5z" fill="#666"/></svg><div style="position:absolute;left:1898px;top:337px;width:19px;height:589px;background:#fff;border:1px solid #a6a6a6;border-width:2px 1px 1px 1px;box-sizing:border-box"></div><div style="position:absolute;left:1898px;top:958px;width:19px;height:18px;background:#fff;border:1px solid #c6c6c6;box-sizing:border-box"></div><svg style="position:absolute;left:1903px;top:965px;" width="9" height="5" viewBox="0 0 9 5"><path d="M0,0 L4.5,5 L9,0z" fill="#666"/></svg><div style="position:absolute;left:0px;top:975px;width:1894px;height:2px;background:#ababab"></div><div style="position:absolute;left:0px;top:976px;width:1920px;height:28px;background:#e6e6e6"></div><svg style="position:absolute;left:28px;top:984px;" width="8" height="12" viewBox="0 0 8 12"><path d="M7,0 V12 L0,6z" fill="#c0c0c0"/></svg><svg style="position:absolute;left:55px;top:984px;" width="8" height="12" viewBox="0 0 8 12"><path d="M0,0 V12 L7,6z" fill="#c0c0c0"/></svg><div style="position:absolute;left:100px;top:975px;width:88px;height:26px;background:#fff;border:1px solid #c6c6c6;border-top:none;box-sizing:border-box"></div><div style="position:absolute;left:100px;top:998px;width:88px;height:3px;background:#107c41"></div><div class="t" style="left:113.43px;top:977.60px;font-size:18.70px;color:#107c41;transform:scaleX(0.9760);transform-origin:0 0;">Sheet1</div><svg style="position:absolute;left:219px;top:979px;" width="22" height="22" viewBox="0 0 22 22"><circle cx="11" cy="11" r="9.5" fill="none" stroke="#777" stroke-width="1.3"/><path d="M11,6 V16 M6,11 H16" stroke="#777" stroke-width="1.8"/></svg><div style="position:absolute;left:1148px;top:984px;width:3px;height:3px;background:#a0a0a0"></div><div style="position:absolute;left:1148px;top:990px;width:3px;height:3px;background:#a0a0a0"></div><div style="position:absolute;left:1148px;top:996px;width:3px;height:3px;background:#a0a0a0"></div><div style="position:absolute;left:1166px;top:981px;width:730px;height:19px;background:#dcdcdc"></div><div style="position:absolute;left:1166px;top:981px;width:19px;height:19px;background:#fff;border:1px solid #c6c6c6;box-sizing:border-box"></div><svg style="position:absolute;left:1173px;top:986px;" width="6" height="9" viewBox="0 0 6 9"><path d="M6,0 V9 L0,4.5z" fill="#777"/></svg><div style="position:absolute;left:1185px;top:981px;width:658px;height:19px;background:#fff;border:1px solid #c6c6c6;box-sizing:border-box"></div><div style="position:absolute;left:1876px;top:981px;width:21px;height:19px;background:#fff;border:1px solid #c6c6c6;box-sizing:border-box"></div><svg style="position:absolute;left:1884px;top:986px;" width="6" height="9" viewBox="0 0 6 9"><path d="M0,0 V9 L6,4.5z" fill="#777"/></svg><div style="position:absolute;left:0px;top:1004px;width:1920px;height:1px;background:#d4d4d4"></div><div style="position:absolute;left:0px;top:1005px;width:1920px;height:27px;background:#f3f3f3"></div><div class="t" style="left:8.60px;top:1012.00px;font-size:13.00px;color:#444;transform:scaleX(1.1687);transform-origin:0 0;">準備完了</div><div style="position:absolute;left:1574px;top:1005px;width:42px;height:27px;background:#d5d5d5"></div><svg style="position:absolute;left:1586px;top:1010px;" width="18" height="16" viewBox="0 0 18 16"><rect x="0.5" y="0.5" width="17" height="15" fill="none" stroke="#888"/><path d="M0,5.5 H18 M0,10.5 H18 M6.5,0 V16 M11.5,0 V16" stroke="#888"/></svg><svg style="position:absolute;left:1627px;top:1010px;" width="18" height="16" viewBox="0 0 18 16"><rect x="0.5" y="0.5" width="17" height="15" fill="none" stroke="#888"/><rect x="4.5" y="3.5" width="9" height="9" fill="none" stroke="#888"/><path d="M6,6 H12 M6,9 H12" stroke="#888"/></svg><svg style="position:absolute;left:1669px;top:1010px;" width="18" height="16" viewBox="0 0 18 16"><rect x="0.5" y="0.5" width="17" height="15" fill="none" stroke="#888"/><path d="M0,9.5 H9.5 V0 M5.5,0 V9.5" fill="none" stroke="#888"/></svg><div style="position:absolute;left:1705px;top:1017px;width:10px;height:2px;background:#666"></div><div style="position:absolute;left:1719px;top:1017px;width:126px;height:1px;background:#aaa"></div><div style="position:absolute;left:1779px;top:1011px;width:5px;height:14px;background:#666"></div><svg style="position:absolute;left:1847px;top:1011px;" width="12" height="12" viewBox="0 0 12 12"><path d="M6,0 V12 M0,6 H12" stroke="#555" stroke-width="2"/></svg><div class="t" style="left:1870.34px;top:1009.58px;font-size:17.10px;color:#333;transform:scaleX(0.9341);transform-origin:0 0;">100%</div><div style="position:absolute;left:1884px;top:494px;width:46px;height:46px;border-radius:50%;background:#0a7de2;box-shadow:0 2px 6px rgba(0,0,0,0.25)"></div><svg style="position:absolute;left:1890px;top:502px;" width="30" height="32" viewBox="0 0 30 32"><g fill="#fff"><path d="M9.3,2 L16,6.9 L9.3,11.8 L2.6,6.9 Z"/><path d="M24.4,2 L31,6.9 L24.4,11.8 L17.7,6.9 Z"/><path d="M9.3,13.2 L16,18 L9.3,22.9 L2.6,18 Z"/><path d="M24.4,13.2 L31,18 L24.4,22.9 L17.7,18 Z"/><path d="M16.8,20.3 L23.3,25 L16.8,29.8 L10.2,25 Z"/></g></svg><svg style="position:absolute;left:16px;top:89px;" width="38" height="40" viewBox="0 0 38 40"><rect x="2" y="4.5" width="27" height="30" rx="1.5" fill="#f0c57d"/>
<rect x="7" y="4" width="17" height="5" rx="1" fill="#6b6b6b"/><rect x="12" y="1" width="7" height="5" rx="1.5" fill="#6b6b6b"/><rect x="14" y="2.5" width="3" height="2.5" fill="#f3f3f3"/>
<path d="M21.5,18.5 H31 L35.5,23 V38.5 H21.5 Z" fill="#fff" stroke="#6b6b6b"/><path d="M31,18.5 V23 H35.5" fill="none" stroke="#6b6b6b"/></svg><div class="t" style="left:6.00px;top:133.13px;font-size:13.00px;color:#262626;transform:scaleX(0.9974);transform-origin:0 0;">貼り付け</div><svg style="position:absolute;left:30px;top:157px;" width="8" height="5" viewBox="0 0 8 5"><path d="M0,0 h7 l-3.5,4z" fill="#555"/></svg><svg style="position:absolute;left:63px;top:89px;" width="18" height="20" viewBox="0 0 18 20"><path d="M4,1 L12,13 M13,1 L5,13" stroke="#6b6b6b" stroke-width="1.6"/><circle cx="4" cy="15.5" r="2.6" fill="none" stroke="#3c78c0" stroke-width="1.4"/><circle cx="13" cy="15.5" r="2.6" fill="none" stroke="#3c78c0" stroke-width="1.4"/></svg><div class="t" style="left:86.00px;top:92.00px;font-size:15.00px;color:#262626;transform:scaleX(0.8421);transform-origin:0 0;">切り取り</div><svg style="position:absolute;left:63px;top:118px;" width="19" height="19" viewBox="0 0 19 19"><path d="M0.5,0.5 H7 L9.5,3 V12.5 H0.5 Z" fill="#fff" stroke="#6b6b6b"/><path d="M7.5,6.5 H14 L17.5,10 V18.5 H7.5 Z" fill="#fff" stroke="#6b6b6b"/><path d="M2,5 H6 M2,8 H6 M9.5,11 H15 M9.5,13.5 H15 M9.5,16 H15" stroke="#3c78c0"/></svg><div class="t" style="left:84.48px;top:120.00px;font-size:15.00px;color:#262626;transform:scaleX(0.7619);transform-origin:0 0;">コピー</div><svg style="position:absolute;left:127px;top:126px;" width="8" height="5" viewBox="0 0 8 5"><path d="M0,0 h7 l-3.5,4z" fill="#555"/></svg><svg style="position:absolute;left:63px;top:146px;" width="21" height="18" viewBox="0 0 21 18"><path d="M1.4,8.5 L7.7,6.3 L12.9,11.1 L8.5,15.9 Z" fill="#e7b86d"/><path d="M7.4,8.56 L13.06,2.9 L16.6,6.43 L10.94,12.1 Z" fill="#6b6b6b"/><path d="M14.6,2.2 L17,-0.2 L19.8,2.6 L17.4,5 Z" fill="#6b6b6b"/></svg><div class="t" style="left:86.00px;top:148.07px;font-size:14.00px;color:#262626;transform:scaleX(0.9244);transform-origin:0 0;">書式のコピー/貼り付け</div><div class="t" style="left:66.43px;top:178.00px;font-size:12.60px;color:#262626;transform:scaleX(0.8747);transform-origin:0 0;">クリップボード</div><svg style="position:absolute;left:216px;top:181px;" width="10" height="10" viewBox="0 0 10 10"><path d="M0.5,9 V0.5 H9" fill="none" stroke="#888"/><path d="M3,3 L9,9 M9,5 V9 H5" fill="none" stroke="#666"/></svg><div style="position:absolute;left:235px;top:95px;width:175px;height:28px;background:#fff;border:1px solid #c6c6c6;box-sizing:border-box"></div><div class="t" style="left:238.00px;top:103.08px;font-size:14.67px;color:#333;transform:scaleX(1.1115);transform-origin:0 0;">Yu Gothic</div><svg style="position:absolute;left:397px;top:107px;" width="8" height="5" viewBox="0 0 8 5"><path d="M0,0 h7 l-3.5,4z" fill="#555"/></svg><div style="position:absolute;left:409px;top:95px;width:48px;height:28px;background:#fff;border:1px solid #c6c6c6;box-sizing:border-box"></div><div class="t" style="left:412.71px;top:103.08px;font-size:14.67px;color:#333;transform:scaleX(1.1382);transform-origin:0 0;">11</div><svg style="position:absolute;left:445px;top:107px;" width="8" height="5" viewBox="0 0 8 5"><path d="M0,0 h7 l-3.5,4z" fill="#555"/></svg><svg style="position:absolute;left:463px;top:97px;" width="17" height="18" viewBox="0 0 17 18"><text x="1" y="17" font-family="Liberation Sans" font-size="16" fill="#555">A</text><path d="M11,4 L13.5,1 L16,4z" fill="#3c78c0"/></svg><svg style="position:absolute;left:488px;top:97px;" width="17" height="18" viewBox="0 0 17 18"><text x="1" y="17" font-family="Liberation Sans" font-size="16" fill="#555">A</text><path d="M11,1 L13.5,4 L16,1z" fill="#3c78c0"/></svg><div class="t" style="left:241px;top:138px;font-size:16px;color:#444;"><b>B</b></div><div class="t" style="left:270px;top:138px;font-size:16px;color:#444;font-family:'Liberation Serif',serif;font-size:18px;top:136px"><i><b>I</b></i></div><div class="t" style="left:293px;top:138px;font-size:16px;color:#444;font-weight:bold"><u>U</u></div><svg style="position:absolute;left:314px;top:146px;" width="8" height="5" viewBox="0 0 8 5"><path d="M0,0 h7 l-3.5,4z" fill="#555"/></svg><div style="position:absolute;left:330px;top:134px;width:1px;height:25px;background:#d0d0d0"></div><svg style="position:absolute;left:338px;top:136px;" width="19" height="19" viewBox="0 0 19 19"><path d="M0.5,0.5 H17.5 M0.5,0.5 V17 M17.5,0.5 V17 M9,0.5 V17 M0.5,9 H17.5" fill="none" stroke="#777" stroke-dasharray="1,1.6"/><path d="M0,17.5 H18" stroke="#666" stroke-width="1.2"/></svg><svg style="position:absolute;left:363px;top:145px;" width="8" height="5" viewBox="0 0 8 5"><path d="M0,0 h7 l-3.5,4z" fill="#555"/></svg><div style="position:absolute;left:378px;top:134px;width:1px;height:25px;background:#d0d0d0"></div><svg style="position:absolute;left:386px;top:135px;" width="21" height="21" viewBox="0 0 21 21"><path d="M3.5,8.5 L10,2.5 L16,8.5 L10,15 Z" fill="#fff" stroke="#555" stroke-width="1.1"/><path d="M8.5,4.5 V2 Q8.5,0.8 10,0.8 Q11.6,0.8 11.6,2 V5.5" fill="none" stroke="#555" stroke-width="1"/><path d="M16,4.5 Q19.5,6 18.5,14.5 L17.5,14.5 Q17,10 15,8.5 Z" fill="#3c78c0"/><rect x="0" y="16" width="20" height="5" fill="#ffff00"/></svg><svg style="position:absolute;left:412px;top:145px;" width="8" height="5" viewBox="0 0 8 5"><path d="M0,0 h7 l-3.5,4z" fill="#555"/></svg><svg style="position:absolute;left:424px;top:136px;" width="22" height="21" viewBox="0 0 22 21"><path d="M5.5,13.5 L10,1.5 H12 L16.5,13.5 M7.2,9.5 H14.8" fill="none" stroke="#444" stroke-width="2.6"/><rect x="1" y="15" width="20" height="5" fill="#ff0000"/></svg><svg style="position:absolute;left:451px;top:145px;" width="8" height="5" viewBox="0 0 8 5"><path d="M0,0 h7 l-3.5,4z" fill="#555"/></svg><div style="position:absolute;left:465px;top:134px;width:1px;height:25px;background:#d0d0d0"></div><svg style="position:absolute;left:477px;top:136px;" width="12" height="20" viewBox="0 0 12 20"><path d="M1.5,2 H8.5 L3,9.5 M2,9.5 H7" fill="none" stroke="#555" stroke-width="1.2"/><path d="M5.5,5 L10.5,1" stroke="#333" stroke-width="1.3"/><path d="M1,10.5 H10 M2,13.5 H9 M2,16.5 H9 M1,19 H10 M5.5,11 V19 M2.5,13 V17 M8.5,13 V17" fill="none" stroke="#555" stroke-width="1"/></svg><svg style="position:absolute;left:499px;top:145px;" width="8" height="5" viewBox="0 0 8 5"><path d="M0,0 h7 l-3.5,4z" fill="#555"/></svg><div class="t" style="left:340.19px;top:175.83px;font-size:15.17px;color:#262626;transform:scaleX(0.7456);transform-origin:0 0;">フォント</div><svg style="position:absolute;left:499px;top:181px;" width="10" height="10" viewBox="0 0 10 10"><path d="M0.5,9 V0.5 H9" fill="none" stroke="#888"/><path d="M3,3 L9,9 M9,5 V9 H5" fill="none" stroke="#666"/></svg><svg style="position:absolute;left:522px;top:99px;" width="19" height="9" viewBox="0 0 19 9"><path d="M0,0.5 H18 M2,3.5 H16 M0,7.5 H18" stroke="#6b6b6b"/></svg><svg style="position:absolute;left:548px;top:103px;" width="19" height="12" viewBox="0 0 19 12"><path d="M0,0.5 H18 M2,4 H16 M0,7.5 H18 M2,11 H16" stroke="#6b6b6b"/></svg><div style="position:absolute;left:570px;top:96px;width:26px;height:27px;background:#c8c8c8"></div><svg style="position:absolute;left:573px;top:108px;" width="20" height="11" viewBox="0 0 20 11"><path d="M1,0.5 H19 M2,4 H18 M1,7 H19 M2,10.5 H18" stroke="#555"/></svg><div style="position:absolute;left:600px;top:97px;width:1px;height:26px;background:#d0d0d0"></div><svg style="position:absolute;left:607px;top:99px;" width="22" height="20" viewBox="0 0 22 20"><text x="3" y="16" font-family="Liberation Sans" font-size="12.5" fill="#555" transform="rotate(-45 3 16)">ab</text><path d="M9.5,17.5 L19,8 M14,7.5 H19.5 V13" fill="none" stroke="#555" stroke-width="1.3"/></svg><svg style="position:absolute;left:631px;top:107px;" width="8" height="5" viewBox="0 0 8 5"><path d="M0,0 h7 l-3.5,4z" fill="#555"/></svg><div style="position:absolute;left:661px;top:92px;width:1px;height:70px;background:#d0d0d0"></div><svg style="position:absolute;left:671px;top:100px;" width="18" height="19" viewBox="0 0 18 19"><text x="0.5" y="9" font-family="Liberation Sans" font-size="10.5" fill="#555">ab</text><text x="0.5" y="17.5" font-family="Liberation Sans" font-size="10.5" fill="#555">c</text><path d="M16,11.5 Q16,14.5 9,14.5 M11,12.5 L8.5,14.5 L11,16.5" fill="none" stroke="#3c78c0" stroke-width="1.3"/></svg><div class="t" style="left:692.00px;top:102.67px;font-size:14.00px;color:#262626;transform:scaleX(0.9426);transform-origin:0 0;">折り返して全体を表示する</div><svg style="position:absolute;left:523px;top:140px;" width="16" height="12" viewBox="0 0 16 12"><path d="M0,0.5 H14 M0,4 H10 M0,7.5 H14 M0,11 H10" stroke="#6b6b6b"/></svg><svg style="position:absolute;left:549px;top:140px;" width="17" height="12" viewBox="0 0 17 12"><path d="M0,0.5 H16 M3,4 H13 M0,7.5 H16 M3,11 H13" stroke="#6b6b6b"/></svg><svg style="position:absolute;left:575px;top:140px;" width="16" height="12" viewBox="0 0 16 12"><path d="M2,0.5 H16 M6,4 H16 M2,7.5 H16 M6,11 H16" stroke="#6b6b6b"/></svg><div style="position:absolute;left:600px;top:134px;width:1px;height:25px;background:#d0d0d0"></div><svg style="position:absolute;left:609px;top:137px;" width="19" height="18" viewBox="0 0 19 18"><path d="M1,0.5 H18 M8,4.5 H18 M8,8.5 H18 M8,12.5 H18 M1,16.5 H18" stroke="#6b6b6b"/><path d="M1,8.5 L5,5 V12 Z M4,8.5 H7" fill="#3c78c0" stroke="#3c78c0" stroke-width="1.5"/></svg><svg style="position:absolute;left:635px;top:137px;" width="19" height="18" viewBox="0 0 19 18"><path d="M1,0.5 H18 M8,4.5 H18 M8,8.5 H18 M8,12.5 H18 M1,16.5 H18" stroke="#6b6b6b"/><path d="M7,8.5 L3,5 V12 Z M1,8.5 H4" fill="#3c78c0" stroke="#3c78c0" stroke-width="1.5"/></svg><svg style="position:absolute;left:668px;top:136px;" width="21" height="20" viewBox="0 0 21 20"><rect x="0.5" y="0.5" width="19" height="18" fill="none" stroke="#6b6b6b"/><path d="M0,5.5 H20 M0,13.5 H20 M10,0 V5 M10,14 V19" stroke="#6b6b6b"/><path d="M3,9.5 H17 M5,7.5 L3,9.5 L5,11.5 M15,7.5 L17,9.5 L15,11.5" fill="none" stroke="#3c78c0" stroke-width="1.2"/></svg><div class="t" style="left:692.11px;top:140.10px;font-size:13.50px;color:#262626;transform:scaleX(0.9843);transform-origin:0 0;">セルを結合して中央揃え</div><svg style="position:absolute;left:845px;top:145px;" width="8" height="5" viewBox="0 0 8 5"><path d="M0,0 h7 l-3.5,4z" fill="#555"/></svg><div class="t" style="left:664.00px;top:178.60px;font-size:12.20px;color:#262626;transform:scaleX(1.1885);transform-origin:0 0;">配置</div><svg style="position:absolute;left:848px;top:181px;" width="10" height="10" viewBox="0 0 10 10"><path d="M0.5,9 V0.5 H9" fill="none" stroke="#888"/><path d="M3,3 L9,9 M9,5 V9 H5" fill="none" stroke="#666"/></svg><div style="position:absolute;left:867px;top:95px;width:152px;height:28px;background:#fff;border:1px solid #c6c6c6;box-sizing:border-box"></div><div class="t" style="left:870.00px;top:101.86px;font-size:14.14px;color:#333;transform:scaleX(1.0253);transform-origin:0 0;">標準</div><svg style="position:absolute;left:1006px;top:107px;" width="8" height="5" viewBox="0 0 8 5"><path d="M0,0 h7 l-3.5,4z" fill="#555"/></svg><svg style="position:absolute;left:869px;top:136px;" width="22" height="21" viewBox="0 0 22 21"><rect x="1" y="1" width="19" height="11" fill="#3c78c0"/><path d="M4,3.5 H17 Q15.5,6.5 17,9.5 H4 Q5.5,6.5 4,3.5 Z" fill="#fff"/><circle cx="10.5" cy="6.5" r="2" fill="#3c78c0"/><g fill="#f3f3f3" stroke="#e7b86d" stroke-width="1.1"><ellipse cx="16" cy="10" rx="3.8" ry="1.5"/><ellipse cx="16" cy="12.6" rx="3.8" ry="1.5"/><ellipse cx="16" cy="15.2" rx="3.8" ry="1.5"/><ellipse cx="9.5" cy="14" rx="3.8" ry="1.5"/><ellipse cx="9.5" cy="16.6" rx="3.8" ry="1.5"/><ellipse cx="9.5" cy="19.2" rx="3.8" ry="1.5"/></g></svg><svg style="position:absolute;left:895px;top:146px;" width="8" height="5" viewBox="0 0 8 5"><path d="M0,0 h7 l-3.5,4z" fill="#555"/></svg><div class="t" style="left:910px;top:138px;font-size:18px;color:#555;">%</div><svg style="position:absolute;left:940px;top:141px;" width="9" height="10" viewBox="0 0 9 10"><circle cx="4.6" cy="3" r="2.9" fill="#555"/><path d="M7.4,3.2 Q7.6,7.8 2.3,9.8 L1.8,8.8 Q4.6,7 4.4,5 Z" fill="#555"/></svg><div style="position:absolute;left:962px;top:134px;width:1px;height:25px;background:#d0d0d0"></div><svg style="position:absolute;left:971px;top:137px;" width="18" height="19" viewBox="0 0 18 19"><path d="M1,4 H7 M4,1 L1,4 L4,7" fill="none" stroke="#3c78c0" stroke-width="1.6"/><text x="8" y="8" font-family="Liberation Sans" font-size="9" fill="#555">.0</text><text x="3" y="18" font-family="Liberation Sans" font-size="9" fill="#555">.00</text></svg><svg style="position:absolute;left:997px;top:137px;" width="18" height="19" viewBox="0 0 18 19"><text x="3" y="8" font-family="Liberation Sans" font-size="9" fill="#555">.00</text><path d="M1,14 H7 M4,11 L7,14 L4,17" fill="none" stroke="#3c78c0" stroke-width="1.6"/><text x="8" y="18" font-family="Liberation Sans" font-size="9" fill="#555">.0</text></svg><div class="t" style="left:918.00px;top:175.92px;font-size:15.08px;color:#262626;transform:scaleX(0.9949);transform-origin:0 0;">数値</div><svg style="position:absolute;left:1009px;top:181px;" width="10" height="10" viewBox="0 0 10 10"><path d="M0.5,9 V0.5 H9" fill="none" stroke="#888"/><path d="M3,3 L9,9 M9,5 V9 H5" fill="none" stroke="#666"/></svg><svg style="position:absolute;left:1041px;top:93px;" width="38" height="35" viewBox="0 0 38 35"><g fill="none" stroke="#777"><rect x="0.5" y="0.5" width="33" height="27"/><path d="M0,7.5 H34 M0,14.5 H34 M0,21.5 H34 M10.5,0 V28 M22.5,0 V28"/></g>
<rect x="11" y="1" width="7" height="6" fill="#e0603a"/><rect x="11" y="8" width="11" height="6" fill="#3c78c0"/><rect x="11" y="15" width="8" height="6" fill="#e0603a"/><rect x="11" y="22" width="5" height="5" fill="#3c78c0"/>
<rect x="18.5" y="15.5" width="18" height="18" fill="#fff" stroke="#777"/><text x="22" y="31" font-family="Liberation Sans" font-size="14" fill="#444">≠</text></svg><div class="t" style="left:1030.00px;top:132.81px;font-size:13.30px;color:#262626;transform:scaleX(1.1041);transform-origin:0 0;">条件付き</div><div class="t" style="left:1038.00px;top:151.91px;font-size:13.39px;color:#262626;transform:scaleX(1.1013);transform-origin:0 0;">書式</div><svg style="position:absolute;left:1071px;top:158px;" width="8" height="5" viewBox="0 0 8 5"><path d="M0,0 h7 l-3.5,4z" fill="#555"/></svg><svg style="position:absolute;left:1112px;top:93px;" width="40" height="36" viewBox="0 0 40 36"><g fill="none" stroke="#777"><rect x="0.5" y="0.5" width="32" height="28"/><path d="M0,7.5 H33 M0,14.5 H33 M0,21.5 H33 M8.5,0 V29 M16.5,0 V29 M24.5,0 V29"/></g>
<rect x="9" y="8" width="24" height="21" fill="#c5d9f1" opacity="0.9"/><g fill="none" stroke="#999"><path d="M8,14.5 H33 M8,21.5 H33 M16.5,8 V29 M24.5,8 V29"/></g>
<path d="M26,20 L36,9 L39,12 L29,23 Z" fill="#777"/><path d="M12,35 C16,26 22,22 28,24 C30,28 26,33 12,35 Z" fill="#3c78c0"/></svg><div class="t" style="left:1090.04px;top:132.75px;font-size:14.25px;color:#262626;transform:scaleX(0.7967);transform-origin:0 0;">テーブルとして</div><div class="t" style="left:1095.00px;top:153.00px;font-size:12.30px;color:#262626;transform:scaleX(1.2195);transform-origin:0 0;">書式設定</div><svg style="position:absolute;left:1160px;top:158px;" width="8" height="5" viewBox="0 0 8 5"><path d="M0,0 h7 l-3.5,4z" fill="#555"/></svg><div style="position:absolute;left:1173px;top:88px;width:287px;height:78px;background:#fff;border:1px solid #c6c6c6;box-sizing:border-box"></div><div style="position:absolute;left:1174px;top:91px;width:133px;height:36px;background:#c6c6c6"></div><div style="position:absolute;left:1178px;top:95px;width:125px;height:28px;background:#fff"></div><div class="t" style="left:1183.00px;top:99.50px;font-size:17.53px;color:#222;transform:scaleX(1.0138);transform-origin:0 0;">標準</div><div style="position:absolute;left:1311px;top:95px;width:125px;height:28px;background:#ffeb9c"></div><div class="t" style="left:1316.90px;top:98.47px;font-size:17.53px;color:#9c5700;transform:scaleX(1.0202);transform-origin:0 0;">どちらでも...</div><div style="position:absolute;left:1178px;top:131px;width:125px;height:28px;background:#ffc7ce"></div><div class="t" style="left:1183.00px;top:135.00px;font-size:16.00px;color:#9c0006;transform:scaleX(1.1108);transform-origin:0 0;">悪い</div><div style="position:absolute;left:1311px;top:131px;width:125px;height:28px;background:#c6efce"></div><div class="t" style="left:1315.35px;top:135.00px;font-size:17.00px;color:#006100;transform:scaleX(1.0742);transform-origin:0 0;">良い</div><div style="position:absolute;left:1441px;top:88px;width:19px;height:78px;background:#fff;border:1px solid #c6c6c6;box-sizing:border-box"></div><div style="position:absolute;left:1442px;top:89px;width:17px;height:26px;background:#e6e6e6"></div><div style="position:absolute;left:1442px;top:114px;width:17px;height:1px;background:#c6c6c6"></div><div style="position:absolute;left:1442px;top:138px;width:17px;height:1px;background:#c6c6c6"></div><svg style="position:absolute;left:1447px;top:100px;" width="8" height="5" viewBox="0 0 8 5"><path d="M0,4 h7 l-3.5,-4z" fill="#c8c8c8"/></svg><svg style="position:absolute;left:1447px;top:125px;" width="8" height="5" viewBox="0 0 8 5"><path d="M0,0 h7 l-3.5,4z" fill="#666"/></svg><svg style="position:absolute;left:1447px;top:148px;" width="8" height="8" viewBox="0 0 8 8"><path d="M0,0.5 h7" stroke="#666"/><path d="M0,3 h7 l-3.5,4z" fill="#666"/></svg><div class="t" style="left:1222.21px;top:175.83px;font-size:15.17px;color:#262626;transform:scaleX(0.7334);transform-origin:0 0;">スタイル</div><svg style="position:absolute;left:1477px;top:90px;" width="38" height="37" viewBox="0 0 38 37"><g fill="#fff" stroke="#777" stroke-width="1.1"><rect x="4.5" y="1.5" width="18" height="6"/><rect x="4.5" y="23.5" width="18" height="12"/></g><path d="M13.5,1.5 V7.5 M4.5,29.5 H22.5 M13.5,23.5 V35.5" stroke="#777" stroke-width="1.1"/>
<rect x="18.5" y="12.5" width="18" height="6" fill="#c5d9f1" stroke="#777" stroke-width="1.1"/><path d="M27.5,12.5 V18.5" stroke="#777" stroke-width="1.1"/><path d="M4,15.5 H16" stroke="#3c78c0" stroke-width="2.6"/><path d="M7.5,10 L1.5,15.5 L7.5,21 Z" fill="#3c78c0"/></svg><div class="t" style="left:1482.00px;top:133.60px;font-size:13.10px;color:#262626;transform:scaleX(1.1687);transform-origin:0 0;">挿入</div><svg style="position:absolute;left:1495px;top:158px;" width="8" height="5" viewBox="0 0 8 5"><path d="M0,0 h7 l-3.5,4z" fill="#555"/></svg><svg style="position:absolute;left:1530px;top:90px;" width="38" height="37" viewBox="0 0 38 37"><g fill="#fff" stroke="#777" stroke-width="1.1"><rect x="1.5" y="1.5" width="18" height="6"/><rect x="1.5" y="21.5" width="18" height="12"/></g><path d="M10.5,1.5 V7.5 M1.5,27.5 H19.5 M10.5,21.5 V33.5" stroke="#777" stroke-width="1.1"/>
<path d="M8.5,12.5 H20.5 L23,15.5 L20.5,18.5 H8.5 Z" fill="#c5d9f1" stroke="#777" stroke-width="1.1"/><path d="M15.5,12.5 V18.5" stroke="#777" stroke-width="1.1"/><path d="M20,7 L36,23 M36,7 C30,10 25,15 20,22" fill="none" stroke="#e0603a" stroke-width="2.4"/></svg><div class="t" style="left:1532.00px;top:132.66px;font-size:14.04px;color:#262626;transform:scaleX(1.0687);transform-origin:0 0;">削除</div><svg style="position:absolute;left:1545px;top:158px;" width="8" height="5" viewBox="0 0 8 5"><path d="M0,0 h7 l-3.5,4z" fill="#555"/></svg><svg style="position:absolute;left:1579px;top:89px;" width="36" height="38" viewBox="0 0 36 38"><path d="M1.5,1 V7 M29.5,1 V7 M4,4 H27" fill="none" stroke="#3c78c0" stroke-width="1.2"/><path d="M7,1.5 L3.5,4 L7,6.5 M24,1.5 L27.5,4 L24,6.5" fill="none" stroke="#3c78c0" stroke-width="1.6"/>
<rect x="1.5" y="9.5" width="33" height="24" fill="#fff" stroke="#777" stroke-width="1.1"/><path d="M9.5,9.5 V33.5 M19.5,9.5 V33.5 M28.5,9.5 V33.5 M1.5,15.5 H34.5 M1.5,27.5 H34.5" stroke="#777" stroke-width="1.1"/>
<rect x="10" y="16" width="9" height="11" fill="#3c78c0"/><path d="M1.5,33.5 V36.5 H12 L14,34 M15,34 L16.5,36.5 H24 L26.5,33.5" fill="none" stroke="#777" stroke-width="1.1"/></svg><div class="t" style="left:1582.30px;top:132.66px;font-size:14.04px;color:#262626;transform:scaleX(1.0687);transform-origin:0 0;">書式</div><svg style="position:absolute;left:1595px;top:158px;" width="8" height="5" viewBox="0 0 8 5"><path d="M0,0 h7 l-3.5,4z" fill="#555"/></svg><div class="t" style="left:1534.67px;top:175.83px;font-size:15.17px;color:#262626;transform:scaleX(0.7692);transform-origin:0 0;">セル</div><svg style="position:absolute;left:1635px;top:89px;" width="18" height="19" viewBox="0 0 18 19"><path d="M16,4 V1.2 H1.5 L9,9.5 L1.5,17.8 H16 V15" fill="none" stroke="#444" stroke-width="2.2"/></svg><div class="t" style="left:1656.12px;top:92.23px;font-size:13.27px;color:#262626;transform:scaleX(0.9992);transform-origin:0 0;">オート SUM</div><svg style="position:absolute;left:1736px;top:96px;" width="8" height="5" viewBox="0 0 8 5"><path d="M0,0 h7 l-3.5,4z" fill="#555"/></svg><svg style="position:absolute;left:1635px;top:116px;" width="18" height="19" viewBox="0 0 18 19"><rect x="0.5" y="0.5" width="16" height="17" fill="#fff" stroke="#6b6b6b"/><rect x="0.5" y="0.5" width="16" height="3" fill="#6b6b6b"/><path d="M8.5,5 V14 M5,10.5 L8.5,14 L12,10.5" fill="none" stroke="#3c78c0" stroke-width="2"/></svg><div class="t" style="left:1656.33px;top:117.30px;font-size:15.50px;color:#262626;transform:scaleX(0.6510);transform-origin:0 0;">フィル</div><svg style="position:absolute;left:1692px;top:125px;" width="8" height="5" viewBox="0 0 8 5"><path d="M0,0 h7 l-3.5,4z" fill="#555"/></svg><svg style="position:absolute;left:1635px;top:144px;" width="18" height="16" viewBox="0 0 18 16"><path d="M1,11 L10,2 L16,7 L7,16 Z" fill="#e87a90"/><path d="M1,11 L4,8 L10,13 L7,16 Z" fill="#f3b3c1"/></svg><div class="t" style="left:1655.57px;top:144.65px;font-size:15.35px;color:#262626;transform:scaleX(0.6982);transform-origin:0 0;">クリア</div><svg style="position:absolute;left:1692px;top:152px;" width="8" height="5" viewBox="0 0 8 5"><path d="M0,0 h7 l-3.5,4z" fill="#555"/></svg><svg style="position:absolute;left:1766px;top:91px;" width="38" height="33" viewBox="0 0 38 33"><path d="M1,14 L6.5,1 L12,14 M3,9.5 H10" fill="none" stroke="#3c78c0" stroke-width="2"/><path d="M1.5,18 H11.5 L1.5,30 H12" fill="none" stroke="#9559c8" stroke-width="2"/><path d="M16,8 H35 L28,16 V25 H23 V16 Z" fill="#777"/><path d="M20,9.5 H31 L26.2,15 V23.5 H24.8 V15 Z" fill="#f3f3f3"/></svg><div class="t" style="left:1752.60px;top:133.99px;font-size:12.20px;color:#262626;transform:scaleX(1.0656);transform-origin:0 0;">並べ替えと</div><div class="t" style="left:1751.30px;top:151.58px;font-size:14.42px;color:#262626;transform:scaleX(0.7266);transform-origin:0 0;">フィルター</div><svg style="position:absolute;left:1808px;top:158px;" width="8" height="5" viewBox="0 0 8 5"><path d="M0,0 h7 l-3.5,4z" fill="#555"/></svg><svg style="position:absolute;left:1824px;top:89px;" width="38" height="37" viewBox="0 0 38 37"><circle cx="23.5" cy="12.5" r="11" fill="#fff" stroke="#3c78c0" stroke-width="2.6"/><path d="M15.5,20.5 L4,32" stroke="#3c78c0" stroke-width="4.5" stroke-linecap="round"/></svg><div class="t" style="left:1823.00px;top:134.80px;font-size:12.20px;color:#262626;transform:scaleX(1.1710);transform-origin:0 0;">検索と</div><div class="t" style="left:1822.60px;top:152.61px;font-size:13.39px;color:#262626;transform:scaleX(1.0976);transform-origin:0 0;">選択</div><svg style="position:absolute;left:1855px;top:158px;" width="8" height="5" viewBox="0 0 8 5"><path d="M0,0 h7 l-3.5,4z" fill="#555"/></svg><div class="t" style="left:1734.60px;top:177.00px;font-size:14.00px;color:#262626;transform:scaleX(1.0143);transform-origin:0 0;">編集</div><svg style="position:absolute;left:1898px;top:181px;" width="12" height="7" viewBox="0 0 12 7"><path d="M1,6 L6,1 L11,6" fill="none" stroke="#555" stroke-width="1.4"/></svg><div style="position:absolute;left:0px;top:1032px;width:1920px;height:48px;background:#0c1018"></div><svg style="position:absolute;left:20px;top:1047px;" width="20" height="20" viewBox="0 0 20 20"><path d="M0,2.5 L8.5,1.3 V9.3 H0 Z M9.5,1.1 L20,0 V9.3 H9.5 Z M0,10.5 H8.5 V18.6 L0,17.5 Z M9.5,10.5 H20 V20 L9.5,18.8 Z" fill="#fff"/></svg><div style="position:absolute;left:60px;top:1032px;width:430px;height:48px;background:#f0f0f0"></div><svg style="position:absolute;left:70px;top:1043px;" width="28" height="28" viewBox="0 0 28 28"><circle cx="14" cy="14" r="11.5" fill="none" stroke="#111" stroke-width="3.2"/></svg><div class="t" style="left:108.21px;top:1049.00px;font-size:17.00px;color:#444;transform:scaleX(0.8933);transform-origin:0 0;">ここに入力して検索</div><svg style="position:absolute;left:456px;top:1047px;" width="16" height="22" viewBox="0 0 16 22"><rect x="4" y="0.8" width="8" height="13" rx="4" fill="none" stroke="#333" stroke-width="1.6"/><path d="M1.5,10 C1.5,17 14.5,17 14.5,10 M8,16.5 V20 M4,20.5 H12" fill="none" stroke="#333" stroke-width="1.6"/></svg><div style="position:absolute;left:0px;top:1031px;width:1920px;height:1px;background:#fff"></div><svg style="position:absolute;left:509px;top:1047px;" width="22" height="20" viewBox="0 0 22 20"><path d="M1,1.5 H13 M1,18.5 H13 M3.5,4.5 H10.5 V15.5 H3.5 Z M0.5,1 V4 M13.5,1 V4 M0.5,16 V19 M13.5,16 V19" fill="none" stroke="#fff" stroke-width="1.1"/><path d="M19.5,0 V20" stroke="#fff" stroke-width="1.1"/><rect x="18" y="7" width="3" height="4" fill="#fff"/></svg><svg style="position:absolute;left:570px;top:1045px;" width="28" height="23" viewBox="0 0 28 23"><path d="M0,2 Q0,0 2,0 H9 L11,2 H26 Q28,2 28,4 V21 Q28,23 26,23 H2 Q0,23 0,21 Z" fill="#ffe08a"/><path d="M0,5 H28 V21 Q28,23 26,23 H2 Q0,23 0,21 Z" fill="#fdd56a"/><rect x="2" y="2" width="6" height="2" fill="#fff"/><path d="M6,23 V13 H22 V23 H18 V17 H10 V23 Z" fill="#3ab0e8"/></svg><div style="position:absolute;left:559px;top:1078px;width:51px;height:2px;background:#76b9ed"></div><svg style="position:absolute;left:631px;top:1042px;" width="29" height="29" viewBox="0 0 29 29"><circle cx="14.5" cy="14.5" r="14" fill="#db4437"/>
<path d="M14.5,14.5 L2.4,7.5 A14,14 0 0 0 14.5,28.5 Z" fill="#0f9d58"/>
<path d="M14.5,14.5 L14.5,28.5 A14,14 0 0 0 28.5,14.5 L26.6,7.5 Z" fill="#ffcd40"/>
<circle cx="14.5" cy="14.5" r="6.4" fill="#fff"/><circle cx="14.5" cy="14.5" r="5" fill="#4285f4"/></svg><div style="position:absolute;left:621px;top:1078px;width:51px;height:2px;background:#76b9ed"></div><svg style="position:absolute;left:692px;top:1041px;" width="30" height="30" viewBox="0 0 30 30"><path d="M10,11 L25,9 L23,22 L7,24 Z" fill="#3a3a3a" stroke="#8a8a8a" stroke-width="1"/><path d="M7,24 L23,22 L20,28 L1,29 Z" fill="#8f8f8f"/><path d="M4,26.5 L19,25" stroke="#5a5a5a" stroke-width="1"/><circle cx="22" cy="8" r="6" fill="#d8d8d8" stroke="#bdbdbd" stroke-width="2" stroke-dasharray="1.5,1.2"/><circle cx="22" cy="8" r="2.2" fill="#8a8a8a"/></svg><svg style="position:absolute;left:755px;top:1043px;" width="29" height="28" viewBox="0 0 29 28"><rect x="11" y="6" width="17" height="15" fill="#0a64c8"/><path d="M13,8 L19.5,14 L26,8" fill="none" stroke="#fff" stroke-width="1.8"/><path d="M0,3.5 L16,0 V28 L0,24.5 Z" fill="#0072c6"/><ellipse cx="7.5" cy="14" rx="4" ry="5.3" fill="none" stroke="#fff" stroke-width="2.4"/></svg><div style="position:absolute;left:745px;top:1078px;width:51px;height:2px;background:#76b9ed"></div><svg style="position:absolute;left:818px;top:1043px;" width="28" height="28" viewBox="0 0 28 28"><circle cx="14" cy="14" r="13.5" fill="#f6f6f6"/><g fill="none" stroke="#e8262a" stroke-width="2"><circle cx="9" cy="10" r="3.4"/><circle cx="9" cy="18" r="3.4"/><circle cx="17" cy="18" r="3.4"/></g><circle cx="17" cy="10" r="3.4" fill="none" stroke="#333" stroke-width="2"/></svg><svg style="position:absolute;left:879px;top:1042px;" width="30" height="30" viewBox="0 0 30 30"><rect width="30" height="30" fill="#0a5cb8"/><path d="M6,24 Q2,24 3,20 Q3,16 7,16 Q7,11 11,10 Q12,4 16,5 Q20,5 21,10 Q25,11 24,16 Q28,16 27,20 Q27,24 24,24 Z" fill="#fff"/><path d="M11,21 L19,13 M14,13 H19 V18" fill="none" stroke="#0a5cb8" stroke-width="2.4"/></svg><svg style="position:absolute;left:940px;top:1042px;" width="31" height="30" viewBox="0 0 31 30"><rect width="31" height="30" rx="6" fill="#00c300"/><ellipse cx="15.5" cy="13.5" rx="11.5" ry="9" fill="#fff"/><path d="M13,21 L14,26 L19,21 Z" fill="#fff"/><text x="15.5" y="16.5" text-anchor="middle" font-family="Liberation Sans" font-weight="bold" font-size="8" fill="#00c300">LINE</text></svg><div style="position:absolute;left:930px;top:1078px;width:52px;height:2px;background:#76b9ed"></div><svg style="position:absolute;left:1002px;top:1041px;" width="32" height="31" viewBox="0 0 32 31"><path d="M3,20 Q0,10 10,7 Q22,4 28,12 Q31,20 23,24 Q17,26 14,22 Q12,19 9,23 Q5,27 3,20 Z" fill="#b9d7ee"/><circle cx="8" cy="15" r="2.3" fill="#e63c2e"/><circle cx="12" cy="10.5" r="2.3" fill="#6cc04a"/><circle cx="18" cy="9" r="2.3" fill="#f5c32c"/><circle cx="13" cy="17" r="1.6" fill="#102030"/><path d="M25,3 L16,30" stroke="#e07e1e" stroke-width="2.2"/><path d="M24,1 L30,0 L27,7 Z" fill="#caa86a"/></svg><div style="position:absolute;left:993px;top:1078px;width:51px;height:2px;background:#76b9ed"></div><div style="position:absolute;left:1050px;top:1032px;width:61px;height:48px;background:#393e46"></div><svg style="position:absolute;left:1066px;top:1043px;" width="27" height="27" viewBox="0 0 27 27"><path d="M0,3.5 L16,0 V27 L0,23.5 Z" fill="#1f7244"/><rect x="15.5" y="3" width="11" height="21" fill="#1f7244"/><rect x="16.5" y="4" width="9.5" height="19" fill="#fff"/><path d="M17,7 H26 M17,10 H26 M17,13 H26 M17,16 H26 M17,19 H26" stroke="#5fa57a" stroke-width="1.5"/><path d="M20.5,4 V23" stroke="#fff" stroke-width="1.2"/><path d="M4.5,8 L11,19 M11,8 L4.5,19" stroke="#fff" stroke-width="2.5"/></svg><div style="position:absolute;left:1050px;top:1078px;width:61px;height:2px;background:#76b9ed"></div><svg style="position:absolute;left:1513px;top:1046px;" width="21" height="21" viewBox="0 0 21 21"><circle cx="14" cy="5" r="3.5" fill="none" stroke="#fff" stroke-width="1.2"/><path d="M8,15 Q9,9 14,9 Q19,9 20,15" fill="none" stroke="#fff" stroke-width="1.2"/><circle cx="6.5" cy="11" r="3.5" fill="#0c1018" stroke="#fff" stroke-width="1.2"/><path d="M0.6,20.5 Q1.5,15 6.5,15 Q11.5,15 12.4,20.5" fill="none" stroke="#fff" stroke-width="1.2"/></svg><svg style="position:absolute;left:1560px;top:1052px;" width="18" height="10" viewBox="0 0 18 10"><path d="M1,9 L9,1 L17,9" fill="none" stroke="#fff" stroke-width="1.2"/></svg><svg style="position:absolute;left:1589px;top:1049px;" width="22" height="15" viewBox="0 0 22 15"><rect x="3.5" y="3.5" width="16" height="10" fill="none" stroke="#fff" stroke-width="1.1"/><rect x="5" y="5" width="13" height="7" fill="#fff"/><rect x="20" y="6.5" width="1.5" height="4" fill="#fff"/><path d="M1.5,0 V4 M4,0 V4 M0.5,4 H5 V6 H0.5 Z M2.8,6 V9" stroke="#fff" stroke-width="1"/></svg><svg style="position:absolute;left:1618px;top:1049px;" width="22" height="19" viewBox="0 0 22 19"><path d="M3,14 Q0,14 0.5,10.5 Q1,7.5 4,7.5 Q5,2 10,2 Q15,2 16,7 Q20,7 20,11 Q20,14 17,14 Z" fill="#fff"/><circle cx="14" cy="12" r="6" fill="#2a72d8"/><path d="M10.5,11 A3.8,3.8 0 0 1 17,9.5 M17.5,13 A3.8,3.8 0 0 1 11,14.5" fill="none" stroke="#fff" stroke-width="1.2"/></svg><svg style="position:absolute;left:1652px;top:1049px;" width="17" height="17" viewBox="0 0 17 17"><path d="M1.5,15 A13.5,13.5 0 0 1 15,1.5 M4.5,15 A10.5,10.5 0 0 1 15,4.5 M7.5,15 A7.5,7.5 0 0 1 15,7.5 M10.5,15 A4.5,4.5 0 0 1 15,10.5" fill="none" stroke="#fff" stroke-width="1"/><circle cx="14" cy="14" r="1.8" fill="#fff"/></svg><svg style="position:absolute;left:1678px;top:1051px;" width="20" height="15" viewBox="0 0 20 15"><path d="M0.5,4.5 H4 L9,0.8 V14.2 L4,10.5 H0.5 Z" fill="none" stroke="#fff" stroke-width="1"/><path d="M12,4.5 L18,10.5 M18,4.5 L12,10.5" stroke="#fff" stroke-width="1.1"/></svg><svg style="position:absolute;left:1710px;top:1049px;" width="19" height="17" viewBox="0 0 19 17"><path d="M5,0.5 L0,3.8 L5,7 L9.5,3.8 Z M14,0.5 L19,3.8 L14,7 L9.5,3.8 Z M5,7 L0,10.2 L5,13.5 L9.5,10.2 Z M14,7 L19,10.2 L14,13.5 L9.5,10.2 Z M5,14.5 L9.5,17 L14,14.5 L9.5,11.5 Z" fill="#fff"/></svg><div class="t" style="left:1736.92px;top:1044.89px;font-size:20.06px;color:#fff;transform:scaleX(1.0254);transform-origin:0 0;">あ</div><div class="t" style="left:1794.00px;top:1039.00px;font-size:14.00px;color:#fff;transform:scaleX(1.0000);transform-origin:0 0;">8:12</div><div class="t" style="left:1770.00px;top:1060.91px;font-size:15.27px;color:#fff;transform:scaleX(1.0018);transform-origin:0 0;">2018/07/18</div><svg style="position:absolute;left:1868px;top:1045px;" width="36" height="33" viewBox="0 0 36 33"><path d="M1,1 H21 V18 H8 L4,22 V18 H1 Z" fill="#fff"/><path d="M4,5.5 H18 M4,9 H18 M4,12.5 H14" stroke="#0c1018" stroke-width="1.3"/><circle cx="20" cy="21" r="10.5" fill="#3a3a3a" stroke="#999" stroke-width="1"/></svg><div class="t" style="left:1880.00px;top:1057.40px;font-size:18.20px;color:#fff;transform:scaleX(0.8718);transform-origin:0 0;">20</div><div style="position:absolute;left:1914px;top:1032px;width:1px;height:48px;background:#4a4e55"></div></body></html>
